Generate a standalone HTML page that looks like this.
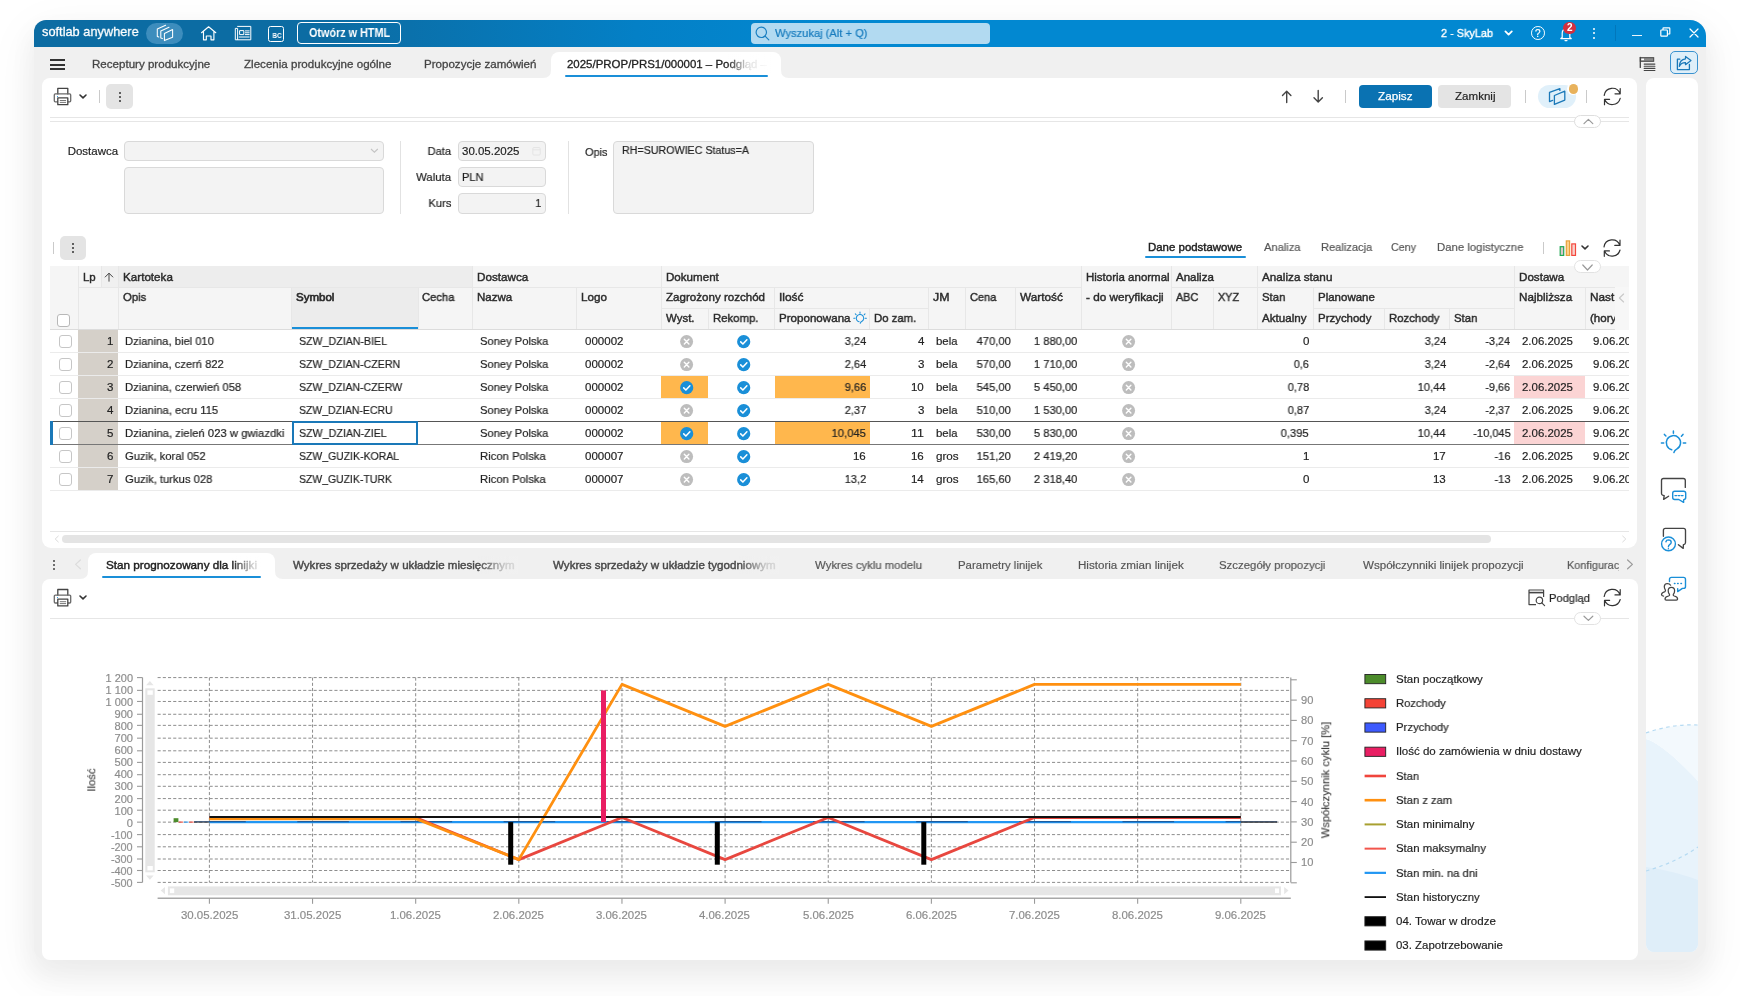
<!DOCTYPE html>
<html lang="pl"><head><meta charset="utf-8"><title>softlab anywhere</title><style>
html,body{margin:0;padding:0;width:1740px;height:996px;overflow:hidden;background:#fff;font-family:"Liberation Sans",sans-serif;}
.a{position:absolute;box-sizing:border-box;}
.t{position:absolute;white-space:pre;display:block;will-change:transform;}
svg{position:absolute;overflow:visible;}
#root{position:absolute;left:0;top:0;width:1740px;height:996px;}
</style></head><body>
<div class="a" style="left:34px;top:20px;width:1672px;height:940px;background:#f0f0f0;border-radius:12px 16px 16px 12px;box-shadow:0 13px 22px 5px rgba(0,0,0,0.04),0 14px 50px 4px rgba(0,0,0,0.05);"></div>
<div class="a" style="left:34px;top:20px;width:1672px;height:27px;border-radius:12px 16px 0 0;background:linear-gradient(90deg,#0c6ca3 0%,#0c6ca3 18%,#0480c6 36%,#0288d1 48%,#0288d1 100%);"></div>
<span class="t" style="top:24.20px;font-size:12.8px;line-height:16.8px;color:#fff;left:41.70px;transform-origin:0 50%;transform:scaleX(0.9984);-webkit-text-stroke:0.27px #fff;">softlab anywhere</span>
<div class="a" style="left:146px;top:23px;width:37px;height:21px;background:#3d8dbd;border-radius:11px;"></div>
<svg style="left:0;top:0" width="1740" height="996" viewBox="0 0 1740 996"><path d="M164.4 33.4 L172.6 29.6 V37.2 L164.4 40.6 Z M169 27.3 L160.8 30.9 V38 L162.4 38.6 M165.6 25.3 L157.3 28.9 V36.4 L158.8 37" fill="none" stroke="#fff" stroke-width="1.05" stroke-linejoin="round" stroke-linecap="round" /></svg>
<svg style="left:0;top:0" width="1740" height="996" viewBox="0 0 1740 996"><path d="M201.5 32.7 L208.6 26.8 L215.8 32.7 M203.5 31.4 V39.8 H206.3 V36 H211 V39.8 H213.9 V31.4" fill="none" stroke="#fff" stroke-width="1.15" stroke-linejoin="round" stroke-linecap="round" /></svg>
<svg style="left:0;top:0" width="1740" height="996" viewBox="0 0 1740 996"><path d="M237.6 26.4 H250.8 V39.8 H235.3 V28.4 H237.6 V39.6 M240 30.6 H243.8 V34.6 H240 Z M245.4 30.9 H249.2 M245.4 32.8 H249.2 M245.4 34.6 H249.2 M239.2 37 H249.2" fill="none" stroke="#fff" stroke-width="1.0" stroke-linejoin="round" stroke-linecap="round" /></svg>
<div class="a" style="left:268.4px;top:25.8px;width:15.8px;height:15.8px;border:1.2px solid #fff;border-radius:2.5px;"></div>
<span class="t" style="top:30.40px;font-size:7px;line-height:11px;color:#fff;font-weight:bold;left:271.64px;transform-origin:50% 50%;transform:scaleX(0.9000);">BC</span>
<div class="a" style="left:297px;top:22px;width:104px;height:22px;border:1.2px solid #fff;border-radius:4px;"></div>
<span class="t" style="top:25.20px;font-size:12px;line-height:16px;color:#fff;font-weight:bold;left:308.50px;transform-origin:0 50%;transform:scaleX(0.9000);">Otwórz w HTML</span>
<div class="a" style="left:751px;top:22.5px;width:239px;height:21.5px;background:#b2daf1;border-radius:4px;"></div>
<svg style="left:755px;top:25.5px;" width="15" height="15" viewBox="0 0 15 15"><circle cx="6.3" cy="6.3" r="5.2" fill="none" stroke="#1a7fc1" stroke-width="1.2"/><path d="M10.1 10.1 L13.8 13.8" stroke="#1a7fc1" stroke-width="1.2" stroke-linecap="round"/></svg>
<span class="t" style="top:26.15px;font-size:11.5px;line-height:15.5px;color:#187cbe;left:775.00px;transform-origin:0 50%;transform:scaleX(0.9692);-webkit-text-stroke:0.22px #187cbe;">Wyszukaj (Alt + Q)</span>
<span class="t" style="top:25.40px;font-size:11.6px;line-height:15.6px;color:#fff;left:1440.80px;transform-origin:0 50%;transform:scaleX(0.9383);-webkit-text-stroke:0.37px #fff;">2 - SkyLab</span>
<svg style="left:0;top:0" width="1740" height="996" viewBox="0 0 1740 996"><path d="M1505.4 31.4 L1508.6 34.6 L1511.8 31.4" fill="none" stroke="#fff" stroke-width="1.8" stroke-linejoin="round" stroke-linecap="round" /></svg>
<div class="a" style="left:1530.8px;top:26.4px;width:13.8px;height:13.8px;border:1.2px solid #fff;border-radius:50%;"></div>
<span class="t" style="top:26.60px;font-size:10px;line-height:14px;color:#fff;left:1534.92px;transform-origin:50% 50%;transform:scaleX(1.0000);-webkit-text-stroke:0.18px #fff;">?</span>
<svg style="left:1559px;top:27px;" width="14" height="15" viewBox="0 0 14 15"><path d="M3.2 10.6 V6.2 C3.2 3.6 4.8 2 7 2 C9.2 2 10.8 3.6 10.8 6.2 V10.6 L12.2 11.6 H1.8 Z M6 13.6 H8" fill="none" stroke="#fff" stroke-width="1.2" stroke-linejoin="round" stroke-linecap="round"/></svg>
<div class="a" style="left:1563.4px;top:21.8px;width:12.6px;height:12.6px;background:#d32f3f;border-radius:50%;"></div>
<span class="t" style="top:21.30px;font-size:10px;line-height:14px;color:#fff;font-weight:bold;left:1566.92px;transform-origin:50% 50%;transform:scaleX(1.0000);">2</span>
<div class="a" style="left:1593.2px;top:28px;width:2px;height:2px;background:#fff;border-radius:50%;"></div>
<div class="a" style="left:1593.2px;top:32.3px;width:2px;height:2px;background:#fff;border-radius:50%;"></div>
<div class="a" style="left:1593.2px;top:36.7px;width:2px;height:2px;background:#fff;border-radius:50%;"></div>
<div class="a" style="left:1615.4px;top:25px;width:1px;height:16px;background:rgba(0,60,110,0.22);"></div>
<div class="a" style="left:1632px;top:35px;width:10px;height:1.2px;background:#e8f4fb;"></div>
<svg style="left:1659.5px;top:27px;" width="11" height="10" viewBox="0 0 11 10"><g fill="none" stroke="#fff" stroke-width="1.2"><rect x="0.8" y="3" width="6.6" height="6.2" rx="0.8"/><path d="M3 3 V1.4 Q3 0.8 3.6 0.8 H9.2 Q9.8 0.8 9.8 1.4 V6.4 Q9.8 7 9.2 7 H7.4"/></g></svg>
<svg style="left:1689px;top:28px;" width="10" height="10" viewBox="0 0 10 10"><path d="M1 1 L9 9 M9 1 L1 9" stroke="#fff" stroke-width="1.2" stroke-linecap="round"/></svg>
<div class="a" style="left:50px;top:59.2px;width:15px;height:2px;background:#333;"></div>
<div class="a" style="left:50px;top:63.5px;width:15px;height:2px;background:#333;"></div>
<div class="a" style="left:50px;top:67.8px;width:15px;height:2px;background:#333;"></div>
<span class="t" style="top:56.58px;font-size:11.43px;line-height:15.43px;color:#454545;left:92.00px;transform-origin:0 50%;transform:scaleX(1.0126);-webkit-text-stroke:0.3px #454545;">Receptury produkcyjne</span>
<span class="t" style="top:56.58px;font-size:11.43px;line-height:15.43px;color:#454545;left:243.50px;transform-origin:0 50%;transform:scaleX(1.0144);-webkit-text-stroke:0.3px #454545;">Zlecenia produkcyjne ogólne</span>
<span class="t" style="top:56.58px;font-size:11.43px;line-height:15.43px;color:#454545;left:423.50px;transform-origin:0 50%;transform:scaleX(1.0125);-webkit-text-stroke:0.3px #454545;">Propozycje zamówień</span>
<div class="a" style="left:551px;top:52px;width:230px;height:27px;background:#fff;border-radius:8px 8px 0 0;"></div>
<svg style="left:543px;top:70px;" width="8" height="8" viewBox="0 0 8 8"><path d="M8 0 V8 H0 Q8 8 8 0 Z" fill="#fff"/></svg>
<svg style="left:781px;top:70px;" width="8" height="8" viewBox="0 0 8 8"><path d="M0 0 V8 H8 Q0 8 0 0 Z" fill="#fff"/></svg>
<span class="t" style="top:56.58px;font-size:11.43px;line-height:15.43px;color:#222;left:566.80px;transform-origin:0 50%;transform:scaleX(1.0030);-webkit-text-stroke:0.3px #222;">2025/PROP/PRS1/000001 – Podgląd –</span>
<div class="a" style="left:727px;top:54px;width:46px;height:20px;background:linear-gradient(90deg,rgba(255,255,255,0) 0%,rgba(255,255,255,0.85) 45%,#fff 95%);"></div>
<div class="a" style="left:565px;top:75px;width:202.5px;height:2px;background:#1a8fd8;border-radius:1px;"></div>
<svg style="left:0;top:0" width="1740" height="996" viewBox="0 0 1740 996"><rect x="1640.3" y="57.7" width="13.4" height="3.6" fill="#8c8c8c" stroke="#444" stroke-width="1"/><rect x="1641.2" y="58.6" width="2.8" height="1.6" fill="#fff"/></svg>
<svg style="left:0;top:0" width="1740" height="996" viewBox="0 0 1740 996"><path d="M1640.3 57.4 V67.4" fill="none" stroke="#444" stroke-width="1.3" stroke-linejoin="round" stroke-linecap="round" /></svg>
<svg style="left:0;top:0" width="1740" height="996" viewBox="0 0 1740 996"><path d="M1644.2 64.1 H1654.9 M1644.2 66.3 H1654.9 M1644.2 68.4 H1654.9 M1644.2 70.5 H1654.9" fill="none" stroke="#444" stroke-width="1.1" stroke-linejoin="round" stroke-linecap="round" /></svg>
<div class="a" style="left:1669.5px;top:51px;width:28.4px;height:22.8px;background:#dfeff9;border:1.3px solid #3a92cf;border-radius:5px;"></div>
<svg style="left:0;top:0" width="1740" height="996" viewBox="0 0 1740 996"><path d="M1679.8 59.2 H1677.4 V69.6 H1689.4 V64.4" fill="none" stroke="#1a78b8" stroke-width="1.3" stroke-linejoin="round" stroke-linecap="round" /></svg>
<svg style="left:0;top:0" width="1740" height="996" viewBox="0 0 1740 996"><path d="M1685.5 58.8 V56.4 L1691 60.5 L1685.5 64.7 V62.6 Q1681.2 62.4 1679.3 66.4 Q1679.6 59.4 1685.5 58.8 Z" fill="none" stroke="#1a78b8" stroke-width="1.2" stroke-linejoin="round" stroke-linecap="round" /></svg>
<div class="a" style="left:42px;top:78px;width:1595.4px;height:469.5px;background:#fff;border-radius:8px 8px 9px 9px;"></div>
<div class="a" style="left:42px;top:579px;width:1595.5px;height:380.5px;background:#fff;border-radius:8px;"></div>
<div class="a" style="left:1646px;top:78px;width:52px;height:874px;background:#fff;border-radius:8px;overflow:hidden;"><svg style="left:0;top:0" width="52" height="874" viewBox="0 0 52 874"><path d="M0 661 C14 665 34 684 52 703 V874 H0 Z" fill="#e8f3fb"/><path d="M0 655 C16 649 36 646 52 647 V703 C34 684 14 665 0 661 Z" fill="#f3f9fd"/><path d="M0 789 C16 791 36 796 52 802 V874 H0 Z" fill="#dfeef9"/><path d="M0 655 C16 649 36 646 52 647" fill="none" stroke="#b5daf2" stroke-width="1.2" stroke-dasharray="3.5 3.5"/><path d="M0 793 C18 788 36 780 52 769" fill="none" stroke="#b5daf2" stroke-width="1.2" stroke-dasharray="3.5 3.5"/></svg></div>
<svg style="left:0;top:0" width="1740" height="996" viewBox="0 0 1740 996"><path d="M1671.7 449.7 A7.15 7.15 0 1 1 1676.7 449.1 Q1674.6 450.2 1673.9 452.5 M1673.4 430.9 V433.2 M1664.4 434.4 L1665.9 436 M1683 434.4 L1681.4 436.2 M1661.4 442.9 H1663.7 M1683.3 442.9 H1685.7" fill="none" stroke="#1a8fd8" stroke-width="1.5" stroke-linejoin="round" stroke-linecap="round" /></svg>
<svg style="left:0;top:0" width="1740" height="996" viewBox="0 0 1740 996"><path d="M1685.3 487.4 V480.5 Q1685.3 478.5 1683.3 478.5 H1663.5 Q1661.5 478.5 1661.5 480.5 V493.6 Q1661.5 495 1663 495.3 L1664.2 495.6 L1663.6 499.4 L1668.6 496.2" fill="none" stroke="#444" stroke-width="1.35" stroke-linejoin="round" stroke-linecap="round" /></svg>
<svg style="left:0;top:0" width="1740" height="996" viewBox="0 0 1740 996"><path d="M1674.7 491.2 H1683.7 Q1685.7 491.2 1685.7 493.2 V497.4 Q1685.7 499.4 1683.7 499.6 L1683.6 502.4 L1678.8 499.5 H1674.7 Q1672.7 499.5 1672.7 497.5 V493.2 Q1672.7 491.2 1674.7 491.2 Z M1675 495.6 H1676.6 M1678.2 495.6 H1679.8 M1681.4 495.6 H1683" fill="none" stroke="#1a8fd8" stroke-width="1.4" stroke-linejoin="round" stroke-linecap="round" /></svg>
<svg style="left:0;top:0" width="1740" height="996" viewBox="0 0 1740 996"><path d="M1663.4 536.2 V530.4 Q1663.4 528.4 1665.4 528.4 H1683.5 Q1685.5 528.4 1685.5 530.4 V542.6 Q1685.5 544.4 1683.8 544.6 L1683.4 544.7 L1683.2 548.4 L1678.4 544.7" fill="none" stroke="#444" stroke-width="1.35" stroke-linejoin="round" stroke-linecap="round" /></svg>
<svg style="left:0;top:0" width="1740" height="996" viewBox="0 0 1740 996"><path d="M1675.4 543.9 A6.9 6.9 0 1 1 1661.6 543.9 A6.9 6.9 0 1 1 1675.4 543.9 Z M1665.9 541.8 Q1666.4 539.9 1668.5 539.9 Q1671.2 540 1671.2 542.2 Q1671.2 543.6 1669.6 544.6 Q1668.4 545.4 1668.4 546.8 M1668.4 548.6 V548.7" fill="none" stroke="#1a8fd8" stroke-width="1.4" stroke-linejoin="round" stroke-linecap="round" /></svg>
<svg style="left:0;top:0" width="1740" height="996" viewBox="0 0 1740 996"><path d="M1669.5 581.5 V579.4 Q1669.5 577.4 1671.5 577.4 H1683.5 Q1685.5 577.4 1685.5 579.4 V586.4 Q1685.5 588.4 1683.5 588.4 H1682.4 L1677.7 591.6 V588.6 M1674.4 583.5 H1675 M1677.6 583.5 H1678.2 M1680.9 583.5 H1681.5" fill="none" stroke="#1a8fd8" stroke-width="1.4" stroke-linejoin="round" stroke-linecap="round" /></svg>
<svg style="left:0;top:0" width="1740" height="996" viewBox="0 0 1740 996"><path d="M1670.6 585.2 Q1669.6 583.5 1667.4 583.5 Q1664.3 583.6 1664.3 586.6 Q1664.3 588.4 1665.2 589.6 Q1665.9 590.8 1665 591.6 Q1661.5 592.6 1661.5 594.8 Q1661.6 596 1663.6 596" fill="none" stroke="#444" stroke-width="1.25" stroke-linejoin="round" stroke-linecap="round" /></svg>
<svg style="left:0;top:0" width="1740" height="996" viewBox="0 0 1740 996"><path d="M1671.4 587.3 Q1674.6 587.3 1674.6 590.8 Q1674.6 593 1673.4 594.2 Q1672.8 595.4 1674.2 596 Q1677.6 596.8 1677.6 599 Q1677.6 600 1676.4 600 H1666.2 Q1665 600 1665 599 Q1665 596.8 1668.6 596 Q1670 595.4 1669.4 594.2 Q1668.2 593 1668.2 590.8 Q1668.2 587.3 1671.4 587.3 Z" fill="#fff" stroke="#444" stroke-width="1.25" stroke-linejoin="round" stroke-linecap="round" /></svg>
<svg style="left:0;top:0" width="1740" height="996" viewBox="0 0 1740 996"><path d="M57.80 93.90 V88.30 H67.80 V93.90" fill="none" stroke="#444" stroke-width="1.3" stroke-linejoin="round" stroke-linecap="round" /></svg>
<svg style="left:0;top:0" width="1740" height="996" viewBox="0 0 1740 996"><path d="M57.80 101.80 H55.30 Q54.30 101.80 54.30 100.80 V94.90 Q54.30 93.90 55.30 93.90 H69.70 Q70.70 93.90 70.70 94.90 V100.80 Q70.70 101.80 69.70 101.80 H67.80" fill="none" stroke="#6a6a6a" stroke-width="1.3" stroke-linejoin="round" stroke-linecap="round" /></svg>
<svg style="left:0;top:0" width="1740" height="996" viewBox="0 0 1740 996"><path d="M57.80 97.90 H67.80 V104.70 H57.80 Z" fill="#fff" stroke="#444" stroke-width="1.3" stroke-linejoin="round" stroke-linecap="round" /></svg>
<svg style="left:0;top:0" width="1740" height="996" viewBox="0 0 1740 996"><path d="M60.20 100.50 H65.70 M60.20 102.40 H65.70" fill="none" stroke="#666" stroke-width="0.9" stroke-linejoin="round" stroke-linecap="round" /></svg>
<div class="a" style="left:56.5px;top:95.5px;width:1.9px;height:1.2px;background:#3aa0e0;"></div>
<svg style="left:78.5px;top:94.3px;" width="8" height="6" viewBox="0 0 8 6"><path d="M1 1 L4.0 3.8 L7 1" fill="none" stroke="#333" stroke-width="1.6" stroke-linecap="round" stroke-linejoin="round"/></svg>
<div class="a" style="left:98.7px;top:90.4px;width:1.3px;height:12.4px;background:#cacaca;"></div>
<div class="a" style="left:106.2px;top:84.4px;width:26.9px;height:24.7px;background:#e4e4e4;border-radius:5px;"></div>
<div class="a" style="left:118.65px;top:91.55px;width:2px;height:2px;background:#333;border-radius:50%;"></div>
<div class="a" style="left:118.65px;top:95.75px;width:2px;height:2px;background:#333;border-radius:50%;"></div>
<div class="a" style="left:118.65px;top:99.95px;width:2px;height:2px;background:#333;border-radius:50%;"></div>
<svg style="left:0;top:0" width="1740" height="996" viewBox="0 0 1740 996"><path d="M1286.7 102.6 V91.4 M1282.5 95.5 L1286.7 91.3 L1290.9 95.5" fill="none" stroke="#444" stroke-width="1.4" stroke-linejoin="round" stroke-linecap="round" /></svg>
<svg style="left:0;top:0" width="1740" height="996" viewBox="0 0 1740 996"><path d="M1318.2 90.4 V101.8 M1314 97.8 L1318.2 102 L1322.4 97.8" fill="none" stroke="#444" stroke-width="1.4" stroke-linejoin="round" stroke-linecap="round" /></svg>
<div class="a" style="left:1344.5px;top:90.4px;width:1.3px;height:12.4px;background:#cacaca;"></div>
<div class="a" style="left:1358.8px;top:85px;width:73.4px;height:23.4px;background:#0a72b2;border-radius:4px;"></div>
<span class="t" style="top:89.28px;font-size:11.43px;line-height:15.43px;color:#fff;left:1378.00px;transform-origin:0 50%;transform:scaleX(1.0251);-webkit-text-stroke:0.25px #fff;">Zapisz</span>
<div class="a" style="left:1438px;top:85px;width:73px;height:23.4px;background:#e4e4e4;border-radius:4px;"></div>
<span class="t" style="top:89.28px;font-size:11.43px;line-height:15.43px;color:#222;left:1454.50px;transform-origin:0 50%;transform:scaleX(1.0129);-webkit-text-stroke:0.18px #222;">Zamknij</span>
<div class="a" style="left:1524.8px;top:90.4px;width:1.3px;height:12.4px;background:#cacaca;"></div>
<div class="a" style="left:1538.3px;top:84.9px;width:37.7px;height:23.5px;background:#e0f0fa;border-radius:12px;"></div>
<svg style="left:0;top:0" width="1740" height="996" viewBox="0 0 1740 996"><path d="M1554.4 95.5 L1564.8 91.2 V100.1 L1554.4 104.4 Z M1559.9 90.4 V88.6 L1549.5 92.4 V101.6 L1552.6 100.4" fill="none" stroke="#1a78b8" stroke-width="1.3" stroke-linejoin="round" stroke-linecap="round" /></svg>
<div class="a" style="left:1567.4px;top:82.9px;width:12px;height:12px;background:#fff;border-radius:50%;"></div>
<div class="a" style="left:1568.7px;top:84.2px;width:9.4px;height:9.4px;background:#e8b25c;border-radius:50%;"></div>
<div class="a" style="left:1586.1px;top:90.4px;width:1.3px;height:12.4px;background:#cacaca;"></div>
<svg style="left:0;top:0" width="1740" height="996" viewBox="0 0 1740 996"><path d="M1604.20 95.40 A8.2 8.2 0 0 1 1620.00 93.60 M1620.20 88.60 V93.80 H1615.00 M1620.20 98.40 A8.2 8.2 0 0 1 1604.70 99.50 M1604.50 104.70 V99.30 H1609.60" fill="none" stroke="#333" stroke-width="1.2" stroke-linejoin="round" stroke-linecap="round" /></svg>
<div class="a" style="left:50px;top:117.2px;width:1579px;height:1px;background:#e6e6e6;"></div>
<div class="a" style="left:50px;top:120.8px;width:1579px;height:1px;background:#e6e6e6;"></div>
<div class="a" style="left:1574.3px;top:114.5px;width:27.2px;height:13.2px;background:#fff;border:1px solid #dedede;border-radius:7px;"></div>
<svg style="left:1582.5px;top:117.6px;" width="11" height="7" viewBox="0 0 11 7"><path d="M1 5.6 L5.4 1.4 L9.8 5.6" fill="none" stroke="#999" stroke-width="1.2" stroke-linecap="round" stroke-linejoin="round"/></svg>
<span class="t" style="top:143.78px;font-size:11.43px;line-height:15.43px;color:#222;right:1622.00px;transform-origin:100% 50%;transform:scaleX(1.0069);-webkit-text-stroke:0.18px #222;">Dostawca</span>
<div class="a" style="left:124px;top:141px;width:260px;height:20.4px;background:#f3f3f3;border:1px solid #d9d9d9;border-radius:4px;"></div>
<svg style="left:369.5px;top:148.4px;" width="10" height="6" viewBox="0 0 10 6"><path d="M1 1 L4.4 4.2 L7.8 1" fill="none" stroke="#c4c4c4" stroke-width="1.1"/></svg>
<div class="a" style="left:124px;top:167px;width:260px;height:47px;background:#f3f3f3;border:1px solid #d9d9d9;border-radius:4px;"></div>
<div class="a" style="left:399.6px;top:141px;width:1px;height:73px;background:#e2e2e2;"></div>
<span class="t" style="top:143.78px;font-size:11.43px;line-height:15.43px;color:#222;right:1288.60px;transform-origin:100% 50%;transform:scaleX(0.9735);-webkit-text-stroke:0.18px #222;">Data</span>
<span class="t" style="top:169.78px;font-size:11.43px;line-height:15.43px;color:#222;right:1288.60px;transform-origin:100% 50%;transform:scaleX(0.9964);-webkit-text-stroke:0.18px #222;">Waluta</span>
<span class="t" style="top:195.78px;font-size:11.43px;line-height:15.43px;color:#222;right:1288.60px;transform-origin:100% 50%;transform:scaleX(0.9787);-webkit-text-stroke:0.18px #222;">Kurs</span>
<div class="a" style="left:458px;top:141px;width:87.6px;height:20.4px;background:#f3f3f3;border:1px solid #d9d9d9;border-radius:4px;"></div>
<div class="a" style="left:458px;top:167px;width:87.6px;height:20.4px;background:#f3f3f3;border:1px solid #d9d9d9;border-radius:4px;"></div>
<div class="a" style="left:458px;top:193px;width:87.6px;height:20.8px;background:#f3f3f3;border:1px solid #d9d9d9;border-radius:4px;"></div>
<span class="t" style="top:143.78px;font-size:11.43px;line-height:15.43px;color:#222;left:462.30px;transform-origin:0 50%;transform:scaleX(1.0057);-webkit-text-stroke:0.18px #222;">30.05.2025</span>
<svg style="left:532px;top:146px;" width="9" height="10" viewBox="0 0 9 10"><g fill="none" stroke="#e4e4e4" stroke-width="1"><rect x="0.8" y="1.6" width="7.4" height="7.4" rx="1"/><path d="M0.8 3.8 H8.2"/></g></svg>
<span class="t" style="top:169.78px;font-size:11.43px;line-height:15.43px;color:#222;left:462.30px;transform-origin:0 50%;transform:scaleX(0.9670);-webkit-text-stroke:0.18px #222;">PLN</span>
<span class="t" style="top:195.78px;font-size:11.43px;line-height:15.43px;color:#222;right:1199.00px;transform-origin:100% 50%;transform:scaleX(0.9500);-webkit-text-stroke:0.18px #222;">1</span>
<div class="a" style="left:568px;top:141px;width:1px;height:73px;background:#e2e2e2;"></div>
<span class="t" style="top:144.59px;font-size:11.43px;line-height:15.43px;color:#222;left:584.50px;transform-origin:0 50%;transform:scaleX(0.9574);-webkit-text-stroke:0.18px #222;">Opis</span>
<div class="a" style="left:613.3px;top:141px;width:200.6px;height:73px;background:#f3f3f3;border:1px solid #d9d9d9;border-radius:4px;"></div>
<span class="t" style="top:143.28px;font-size:11.43px;line-height:15.43px;color:#222;left:621.80px;transform-origin:0 50%;transform:scaleX(0.9349);-webkit-text-stroke:0.18px #222;">RH=SUROWIEC Status=A</span>
<div class="a" style="left:52.8px;top:241.6px;width:1.3px;height:12.4px;background:#cacaca;"></div>
<div class="a" style="left:59.8px;top:235.5px;width:26.6px;height:24.6px;background:#e4e4e4;border-radius:5px;"></div>
<div class="a" style="left:72.1px;top:242.60000000000002px;width:2px;height:2px;background:#333;border-radius:50%;"></div>
<div class="a" style="left:72.1px;top:246.8px;width:2px;height:2px;background:#333;border-radius:50%;"></div>
<div class="a" style="left:72.1px;top:251.0px;width:2px;height:2px;background:#333;border-radius:50%;"></div>
<span class="t" style="top:239.59px;font-size:11.43px;line-height:15.43px;color:#222;left:1148.20px;transform-origin:0 50%;transform:scaleX(1.0012);-webkit-text-stroke:0.42px #222;">Dane podstawowe</span>
<div class="a" style="left:1145.2px;top:256.4px;width:100.6px;height:2px;background:#1a8fd8;border-radius:1px;"></div>
<span class="t" style="top:239.59px;font-size:11.43px;line-height:15.43px;color:#555;left:1264.00px;transform-origin:0 50%;transform:scaleX(0.9768);-webkit-text-stroke:0.18px #555;">Analiza</span>
<span class="t" style="top:239.59px;font-size:11.43px;line-height:15.43px;color:#555;left:1320.50px;transform-origin:0 50%;transform:scaleX(0.9734);-webkit-text-stroke:0.18px #555;">Realizacja</span>
<span class="t" style="top:239.59px;font-size:11.43px;line-height:15.43px;color:#555;left:1390.80px;transform-origin:0 50%;transform:scaleX(0.9373);-webkit-text-stroke:0.18px #555;">Ceny</span>
<span class="t" style="top:239.59px;font-size:11.43px;line-height:15.43px;color:#555;left:1436.90px;transform-origin:0 50%;transform:scaleX(0.9933);-webkit-text-stroke:0.18px #555;">Dane logistyczne</span>
<div class="a" style="left:1542.8px;top:241.6px;width:1.3px;height:12.4px;background:#cacaca;"></div>
<svg style="left:0;top:0" width="1740" height="996" viewBox="0 0 1740 996"><rect x="1560.2" y="246.7" width="3.5" height="8.7" fill="#dcc6cc" stroke="#21a854" stroke-width="1.2"/><rect x="1566.3" y="240.9" width="3.3" height="14.5" fill="#fdd08a" stroke="#e8a23c" stroke-width="1.2"/><rect x="1571.8" y="243.9" width="3.7" height="11.5" fill="#f8d2cc" stroke="#f4473c" stroke-width="1.2"/></svg>
<svg style="left:1580.6px;top:245.2px;" width="8" height="6" viewBox="0 0 8 6"><path d="M1 1 L4.0 3.8 L7 1" fill="none" stroke="#333" stroke-width="1.6" stroke-linecap="round" stroke-linejoin="round"/></svg>
<svg style="left:0;top:0" width="1740" height="996" viewBox="0 0 1740 996"><path d="M1604.00 247.00 A8.2 8.2 0 0 1 1619.80 245.20 M1620.00 240.20 V245.40 H1614.80 M1620.00 250.00 A8.2 8.2 0 0 1 1604.50 251.10 M1604.30 256.30 V250.90 H1609.40" fill="none" stroke="#333" stroke-width="1.2" stroke-linejoin="round" stroke-linecap="round" /></svg>
<div class="a" style="left:50px;top:266px;width:1579px;height:63.60000000000002px;background:#f5f5f5;"></div>
<div class="a" style="left:118px;top:266px;width:354.6px;height:21.30000000000001px;background:#ededed;"></div>
<div class="a" style="left:101px;top:266px;width:17px;height:21.30000000000001px;background:#f0f0f0;"></div>
<div class="a" style="left:50px;top:266px;width:28px;height:63.60000000000002px;background:#f5f5f5;"></div>
<div class="a" style="left:78px;top:287.3px;width:40px;height:42.30000000000001px;background:#f5f5f5;"></div>
<div class="a" style="left:291.5px;top:287.3px;width:126.5px;height:42.30000000000001px;background:#ececec;"></div>
<div class="a" style="left:292px;top:327.0px;width:126px;height:2px;background:#1a8fd8;"></div>
<div class="a" style="left:77.5px;top:266px;width:1px;height:63.60000000000002px;background:#e7e7e7;"></div>
<div class="a" style="left:117.5px;top:266px;width:1px;height:63.60000000000002px;background:#e7e7e7;"></div>
<div class="a" style="left:472.1px;top:266px;width:1px;height:63.60000000000002px;background:#e7e7e7;"></div>
<div class="a" style="left:660.5px;top:266px;width:1px;height:63.60000000000002px;background:#e7e7e7;"></div>
<div class="a" style="left:1080.8px;top:266px;width:1px;height:63.60000000000002px;background:#e7e7e7;"></div>
<div class="a" style="left:1170.5px;top:266px;width:1px;height:63.60000000000002px;background:#e7e7e7;"></div>
<div class="a" style="left:1256.8px;top:266px;width:1px;height:63.60000000000002px;background:#e7e7e7;"></div>
<div class="a" style="left:1513.8px;top:266px;width:1px;height:63.60000000000002px;background:#e7e7e7;"></div>
<div class="a" style="left:100.5px;top:266px;width:1px;height:21.30000000000001px;background:#e7e7e7;"></div>
<div class="a" style="left:78px;top:286.8px;width:23px;height:1px;background:#e7e7e7;"></div>
<div class="a" style="left:101px;top:286.8px;width:17px;height:1px;background:#e8e8e8;"></div>
<div class="a" style="left:118px;top:286.8px;width:963.3px;height:1px;background:#e7e7e7;"></div>
<div class="a" style="left:1171px;top:286.8px;width:458px;height:1px;background:#e7e7e7;"></div>
<div class="a" style="left:291.0px;top:287.3px;width:1px;height:42.30000000000001px;background:#e7e7e7;"></div>
<div class="a" style="left:417.5px;top:287.3px;width:1px;height:42.30000000000001px;background:#e7e7e7;"></div>
<div class="a" style="left:576.3px;top:287.3px;width:1px;height:42.30000000000001px;background:#e7e7e7;"></div>
<div class="a" style="left:774.3px;top:287.3px;width:1px;height:42.30000000000001px;background:#e7e7e7;"></div>
<div class="a" style="left:927.8px;top:287.3px;width:1px;height:42.30000000000001px;background:#e7e7e7;"></div>
<div class="a" style="left:965.2px;top:287.3px;width:1px;height:42.30000000000001px;background:#e7e7e7;"></div>
<div class="a" style="left:1015.2px;top:287.3px;width:1px;height:42.30000000000001px;background:#e7e7e7;"></div>
<div class="a" style="left:1212.8px;top:287.3px;width:1px;height:42.30000000000001px;background:#e7e7e7;"></div>
<div class="a" style="left:1312.5px;top:287.3px;width:1px;height:42.30000000000001px;background:#e7e7e7;"></div>
<div class="a" style="left:1584.8px;top:287.3px;width:1px;height:42.30000000000001px;background:#e7e7e7;"></div>
<div class="a" style="left:661px;top:308.2px;width:267.29999999999995px;height:1px;background:#e7e7e7;"></div>
<div class="a" style="left:1313px;top:308.2px;width:201.29999999999995px;height:1px;background:#e7e7e7;"></div>
<div class="a" style="left:707.5px;top:308.7px;width:1px;height:20.900000000000034px;background:#e7e7e7;"></div>
<div class="a" style="left:868.8px;top:308.7px;width:1px;height:20.900000000000034px;background:#e7e7e7;"></div>
<div class="a" style="left:1383.5px;top:308.7px;width:1px;height:20.900000000000034px;background:#e7e7e7;"></div>
<div class="a" style="left:1449.2px;top:308.7px;width:1px;height:20.900000000000034px;background:#e7e7e7;"></div>
<div class="a" style="left:50px;top:329.1px;width:1579px;height:1px;background:#dcdcdc;"></div>
<span class="t" style="top:269.79px;font-size:11.43px;line-height:15.43px;color:#2b2b2b;left:82.60px;transform-origin:0 50%;transform:scaleX(0.9996);-webkit-text-stroke:0.42px #2b2b2b;">Lp</span>
<svg style="left:104.4px;top:272px;" width="10" height="11" viewBox="0 0 10 11"><path d="M5 9.2 V1.4 M1.2 5 L5 1.2 L8.8 5" fill="none" stroke="#444" stroke-width="1" stroke-linecap="round" stroke-linejoin="round"/></svg>
<span class="t" style="top:269.79px;font-size:11.43px;line-height:15.43px;color:#2b2b2b;left:122.90px;transform-origin:0 50%;transform:scaleX(1.0205);-webkit-text-stroke:0.42px #2b2b2b;">Kartoteka</span>
<span class="t" style="top:290.19px;font-size:11.43px;line-height:15.43px;color:#2b2b2b;left:122.70px;transform-origin:0 50%;transform:scaleX(0.9878);-webkit-text-stroke:0.42px #2b2b2b;">Opis</span>
<span class="t" style="top:290.19px;font-size:11.43px;line-height:15.43px;color:#2b2b2b;left:295.60px;transform-origin:0 50%;transform:scaleX(1.0072);-webkit-text-stroke:0.67px #2b2b2b;">Symbol</span>
<span class="t" style="top:290.19px;font-size:11.43px;line-height:15.43px;color:#2b2b2b;left:421.70px;transform-origin:0 50%;transform:scaleX(0.9801);-webkit-text-stroke:0.42px #2b2b2b;">Cecha</span>
<span class="t" style="top:269.79px;font-size:11.43px;line-height:15.43px;color:#2b2b2b;left:477.00px;transform-origin:0 50%;transform:scaleX(1.0218);-webkit-text-stroke:0.42px #2b2b2b;">Dostawca</span>
<span class="t" style="top:290.19px;font-size:11.43px;line-height:15.43px;color:#2b2b2b;left:477.00px;transform-origin:0 50%;transform:scaleX(1.0094);-webkit-text-stroke:0.42px #2b2b2b;">Nazwa</span>
<span class="t" style="top:290.19px;font-size:11.43px;line-height:15.43px;color:#2b2b2b;left:581.20px;transform-origin:0 50%;transform:scaleX(1.0191);-webkit-text-stroke:0.42px #2b2b2b;">Logo</span>
<span class="t" style="top:269.79px;font-size:11.43px;line-height:15.43px;color:#2b2b2b;left:665.70px;transform-origin:0 50%;transform:scaleX(1.0151);-webkit-text-stroke:0.42px #2b2b2b;">Dokument</span>
<span class="t" style="top:290.19px;font-size:11.43px;line-height:15.43px;color:#2b2b2b;left:665.70px;transform-origin:0 50%;transform:scaleX(1.0130);-webkit-text-stroke:0.42px #2b2b2b;">Zagrożony rozchód</span>
<span class="t" style="top:310.89px;font-size:11.43px;line-height:15.43px;color:#2b2b2b;left:665.70px;transform-origin:0 50%;transform:scaleX(1.0024);-webkit-text-stroke:0.42px #2b2b2b;">Wyst.</span>
<span class="t" style="top:310.89px;font-size:11.43px;line-height:15.43px;color:#2b2b2b;left:712.50px;transform-origin:0 50%;transform:scaleX(0.9926);-webkit-text-stroke:0.42px #2b2b2b;">Rekomp.</span>
<span class="t" style="top:290.19px;font-size:11.43px;line-height:15.43px;color:#2b2b2b;left:779.30px;transform-origin:0 50%;transform:scaleX(1.0455);-webkit-text-stroke:0.42px #2b2b2b;">Ilość</span>
<span class="t" style="top:310.89px;font-size:11.43px;line-height:15.43px;color:#2b2b2b;left:779.30px;transform-origin:0 50%;transform:scaleX(1.0146);-webkit-text-stroke:0.42px #2b2b2b;">Proponowana</span>
<span class="t" style="top:310.89px;font-size:11.43px;line-height:15.43px;color:#2b2b2b;left:874.00px;transform-origin:0 50%;transform:scaleX(0.9935);-webkit-text-stroke:0.42px #2b2b2b;">Do zam.</span>
<span class="t" style="top:290.19px;font-size:11.43px;line-height:15.43px;color:#2b2b2b;left:932.80px;transform-origin:0 50%;transform:scaleX(1.0818);-webkit-text-stroke:0.42px #2b2b2b;">JM</span>
<span class="t" style="top:290.19px;font-size:11.43px;line-height:15.43px;color:#2b2b2b;left:970.20px;transform-origin:0 50%;transform:scaleX(0.9641);-webkit-text-stroke:0.42px #2b2b2b;">Cena</span>
<span class="t" style="top:290.19px;font-size:11.43px;line-height:15.43px;color:#2b2b2b;left:1020.30px;transform-origin:0 50%;transform:scaleX(1.0336);-webkit-text-stroke:0.42px #2b2b2b;">Wartość</span>
<span class="t" style="top:269.79px;font-size:11.43px;line-height:15.43px;color:#2b2b2b;left:1086.00px;transform-origin:0 50%;transform:scaleX(1.0053);-webkit-text-stroke:0.42px #2b2b2b;">Historia anormal</span>
<span class="t" style="top:290.19px;font-size:11.43px;line-height:15.43px;color:#2b2b2b;left:1086.00px;transform-origin:0 50%;transform:scaleX(1.0287);-webkit-text-stroke:0.42px #2b2b2b;">- do weryfikacji</span>
<span class="t" style="top:269.79px;font-size:11.43px;line-height:15.43px;color:#2b2b2b;left:1175.60px;transform-origin:0 50%;transform:scaleX(1.0104);-webkit-text-stroke:0.42px #2b2b2b;">Analiza</span>
<span class="t" style="top:290.19px;font-size:11.43px;line-height:15.43px;color:#2b2b2b;left:1175.60px;transform-origin:0 50%;transform:scaleX(0.9479);-webkit-text-stroke:0.42px #2b2b2b;">ABC</span>
<span class="t" style="top:290.19px;font-size:11.43px;line-height:15.43px;color:#2b2b2b;left:1218.00px;transform-origin:0 50%;transform:scaleX(0.9507);-webkit-text-stroke:0.42px #2b2b2b;">XYZ</span>
<span class="t" style="top:269.79px;font-size:11.43px;line-height:15.43px;color:#2b2b2b;left:1262.00px;transform-origin:0 50%;transform:scaleX(1.0266);-webkit-text-stroke:0.42px #2b2b2b;">Analiza stanu</span>
<span class="t" style="top:290.19px;font-size:11.43px;line-height:15.43px;color:#2b2b2b;left:1262.00px;transform-origin:0 50%;transform:scaleX(0.9921);-webkit-text-stroke:0.42px #2b2b2b;">Stan</span>
<span class="t" style="top:310.89px;font-size:11.43px;line-height:15.43px;color:#2b2b2b;left:1262.00px;transform-origin:0 50%;transform:scaleX(1.0161);-webkit-text-stroke:0.42px #2b2b2b;">Aktualny</span>
<span class="t" style="top:290.19px;font-size:11.43px;line-height:15.43px;color:#2b2b2b;left:1317.60px;transform-origin:0 50%;transform:scaleX(1.0059);-webkit-text-stroke:0.42px #2b2b2b;">Planowane</span>
<span class="t" style="top:310.89px;font-size:11.43px;line-height:15.43px;color:#2b2b2b;left:1317.60px;transform-origin:0 50%;transform:scaleX(1.0020);-webkit-text-stroke:0.42px #2b2b2b;">Przychody</span>
<span class="t" style="top:310.89px;font-size:11.43px;line-height:15.43px;color:#2b2b2b;left:1388.60px;transform-origin:0 50%;transform:scaleX(0.9936);-webkit-text-stroke:0.42px #2b2b2b;">Rozchody</span>
<span class="t" style="top:310.89px;font-size:11.43px;line-height:15.43px;color:#2b2b2b;left:1454.30px;transform-origin:0 50%;transform:scaleX(0.9921);-webkit-text-stroke:0.42px #2b2b2b;">Stan</span>
<span class="t" style="top:269.79px;font-size:11.43px;line-height:15.43px;color:#2b2b2b;left:1519.00px;transform-origin:0 50%;transform:scaleX(1.0167);-webkit-text-stroke:0.42px #2b2b2b;">Dostawa</span>
<span class="t" style="top:290.19px;font-size:11.43px;line-height:15.43px;color:#2b2b2b;left:1519.00px;transform-origin:0 50%;transform:scaleX(1.0204);-webkit-text-stroke:0.42px #2b2b2b;">Najbliższa</span>
<span class="t" style="top:290.19px;font-size:11.43px;line-height:15.43px;color:#2b2b2b;left:1590.00px;transform-origin:0 50%;transform:scaleX(1.0332);-webkit-text-stroke:0.42px #2b2b2b;">Nast</span>
<span class="t" style="top:310.89px;font-size:11.43px;line-height:15.43px;color:#2b2b2b;left:1590.00px;transform-origin:0 50%;transform:scaleX(1.0107);-webkit-text-stroke:0.42px #2b2b2b;">(hory</span>
<div class="a" style="left:1169.8px;top:267px;width:0.9px;height:19.30000000000001px;background:#f5f5f5;"></div>
<svg style="left:0;top:0" width="1740" height="996" viewBox="0 0 1740 996"><g transform="translate(860 318.2) scale(0.52) translate(-1673.4 -442.7)"><path d="M1671.7 449.7 A7.15 7.15 0 1 1 1676.7 449.1 Q1674.6 450.2 1673.9 452.5 M1673.4 430.9 V433.2 M1664.4 434.4 L1665.9 436 M1683 434.4 L1681.4 436.2 M1661.4 442.9 H1663.7 M1683.3 442.9 H1685.7" fill="none" stroke="#1a8fd8" stroke-width="2" stroke-linecap="round" stroke-linejoin="round"/></g></svg>
<div class="a" style="left:57.3px;top:314.2px;width:13.2px;height:13.2px;background:#fff;border:1px solid #b8b8b8;border-radius:3px;"></div>
<div class="a" style="left:1615px;top:287.3px;width:14px;height:42.30000000000001px;background:#f7f7f7;"></div>
<svg style="left:1617.6px;top:292.6px;" width="7" height="10" viewBox="0 0 7 10"><path d="M5.6 1 L1.4 5 L5.6 9" fill="none" stroke="#c8c8c8" stroke-width="1.1" stroke-linecap="round" stroke-linejoin="round"/></svg>
<div class="a" style="left:1574.2px;top:260.4px;width:27.3px;height:13px;background:#fff;border:1px solid #e2e2e2;border-radius:7px;"></div>
<svg style="left:1582.3px;top:263.8px;" width="11" height="7" viewBox="0 0 11 7"><path d="M0.8 1 L5.5 6 L10.2 1" fill="none" stroke="#999" stroke-width="1.2" stroke-linecap="round" stroke-linejoin="round"/></svg>
<div class="a" style="left:78px;top:329.7px;width:40px;height:23.0px;background:#d5d0c9;"></div>
<div class="a" style="left:50px;top:352.2px;width:1579px;height:1px;background:#ebebeb;"></div>
<div class="a" style="left:58.6px;top:334.59999999999997px;width:13.2px;height:13.2px;background:#fff;border:1px solid #c6c6c6;border-radius:3px;"></div>
<span class="t" style="top:334.29px;font-size:11.43px;line-height:15.43px;color:#222;right:1626.80px;transform-origin:100% 50%;transform:scaleX(1.0093);-webkit-text-stroke:0.18px #222;">1</span>
<span class="t" style="top:334.29px;font-size:11.43px;line-height:15.43px;color:#222;left:124.90px;transform-origin:0 50%;transform:scaleX(0.9793);-webkit-text-stroke:0.18px #222;">Dzianina, biel 010</span>
<span class="t" style="top:334.29px;font-size:11.43px;line-height:15.43px;color:#222;left:299.30px;transform-origin:0 50%;transform:scaleX(0.9306);-webkit-text-stroke:0.18px #222;">SZW_DZIAN-BIEL</span>
<span class="t" style="top:334.29px;font-size:11.43px;line-height:15.43px;color:#222;left:480.30px;transform-origin:0 50%;transform:scaleX(0.9780);-webkit-text-stroke:0.18px #222;">Soney Polska</span>
<span class="t" style="top:334.29px;font-size:11.43px;line-height:15.43px;color:#222;left:584.80px;transform-origin:0 50%;transform:scaleX(1.0101);-webkit-text-stroke:0.18px #222;">000002</span>
<svg style="left:679.6999999999999px;top:334.59999999999997px;" width="13.2" height="13.2" viewBox="0 0 13.2 13.2"><circle cx="6.6" cy="6.6" r="6.5" fill="#bdbdbd"/><path d="M4.3 4.3 L8.9 8.9 M8.9 4.3 L4.3 8.9" stroke="#fff" stroke-width="1.4" stroke-linecap="round"/></svg>
<svg style="left:736.5999999999999px;top:334.5px;" width="13.4" height="13.4" viewBox="0 0 13.4 13.4"><circle cx="6.7" cy="6.7" r="6.6" fill="#1a8fd8"/><path d="M3.7 6.9 L5.9 9.1 L9.9 4.7" fill="none" stroke="#fff" stroke-width="1.5" stroke-linecap="round" stroke-linejoin="round"/></svg>
<span class="t" style="top:334.29px;font-size:11.43px;line-height:15.43px;color:#222;right:874.20px;transform-origin:100% 50%;transform:scaleX(0.9669);-webkit-text-stroke:0.18px #222;">3,24</span>
<span class="t" style="top:334.29px;font-size:11.43px;line-height:15.43px;color:#222;right:816.00px;transform-origin:100% 50%;transform:scaleX(1.0093);-webkit-text-stroke:0.18px #222;">4</span>
<span class="t" style="top:334.29px;font-size:11.43px;line-height:15.43px;color:#222;left:936.00px;transform-origin:0 50%;transform:scaleX(0.9930);-webkit-text-stroke:0.18px #222;">bela</span>
<span class="t" style="top:334.29px;font-size:11.43px;line-height:15.43px;color:#222;right:728.60px;transform-origin:100% 50%;transform:scaleX(0.9827);-webkit-text-stroke:0.18px #222;">470,00</span>
<span class="t" style="top:334.29px;font-size:11.43px;line-height:15.43px;color:#222;right:662.70px;transform-origin:100% 50%;transform:scaleX(0.9801);-webkit-text-stroke:0.18px #222;">1 880,00</span>
<svg style="left:1121.7px;top:334.59999999999997px;" width="13.2" height="13.2" viewBox="0 0 13.2 13.2"><circle cx="6.6" cy="6.6" r="6.5" fill="#bdbdbd"/><path d="M4.3 4.3 L8.9 8.9 M8.9 4.3 L4.3 8.9" stroke="#fff" stroke-width="1.4" stroke-linecap="round"/></svg>
<span class="t" style="top:334.29px;font-size:11.43px;line-height:15.43px;color:#222;right:431.00px;transform-origin:100% 50%;transform:scaleX(1.0093);-webkit-text-stroke:0.18px #222;">0</span>
<span class="t" style="top:334.29px;font-size:11.43px;line-height:15.43px;color:#222;right:294.20px;transform-origin:100% 50%;transform:scaleX(0.9669);-webkit-text-stroke:0.18px #222;">3,24</span>
<span class="t" style="top:334.29px;font-size:11.43px;line-height:15.43px;color:#222;right:229.60px;transform-origin:100% 50%;transform:scaleX(0.9464);-webkit-text-stroke:0.18px #222;">-3,24</span>
<span class="t" style="top:334.29px;font-size:11.43px;line-height:15.43px;color:#222;left:1522.30px;transform-origin:0 50%;transform:scaleX(1.0023);-webkit-text-stroke:0.18px #222;">2.06.2025</span>
<div class="a" style="left:1585.3px;top:329.7px;width:43.7px;height:23.0px;overflow:hidden;"><span class="t" style="left:8px;top:4.60px;font-size:11.43px;line-height:15.43px;color:#222;-webkit-text-stroke:0.18px #222;transform-origin:0 50%;transform:scaleX(1.0);">9.06.2025</span></div>
<div class="a" style="left:78px;top:352.7px;width:40px;height:23.0px;background:#d5d0c9;"></div>
<div class="a" style="left:50px;top:375.2px;width:1579px;height:1px;background:#ebebeb;"></div>
<div class="a" style="left:58.6px;top:357.59999999999997px;width:13.2px;height:13.2px;background:#fff;border:1px solid #c6c6c6;border-radius:3px;"></div>
<span class="t" style="top:357.29px;font-size:11.43px;line-height:15.43px;color:#222;right:1626.80px;transform-origin:100% 50%;transform:scaleX(1.0093);-webkit-text-stroke:0.18px #222;">2</span>
<span class="t" style="top:357.29px;font-size:11.43px;line-height:15.43px;color:#222;left:124.90px;transform-origin:0 50%;transform:scaleX(0.9786);-webkit-text-stroke:0.18px #222;">Dzianina, czerń 822</span>
<span class="t" style="top:357.29px;font-size:11.43px;line-height:15.43px;color:#222;left:299.30px;transform-origin:0 50%;transform:scaleX(0.9262);-webkit-text-stroke:0.18px #222;">SZW_DZIAN-CZERN</span>
<span class="t" style="top:357.29px;font-size:11.43px;line-height:15.43px;color:#222;left:480.30px;transform-origin:0 50%;transform:scaleX(0.9780);-webkit-text-stroke:0.18px #222;">Soney Polska</span>
<span class="t" style="top:357.29px;font-size:11.43px;line-height:15.43px;color:#222;left:584.80px;transform-origin:0 50%;transform:scaleX(1.0101);-webkit-text-stroke:0.18px #222;">000002</span>
<svg style="left:679.6999999999999px;top:357.59999999999997px;" width="13.2" height="13.2" viewBox="0 0 13.2 13.2"><circle cx="6.6" cy="6.6" r="6.5" fill="#bdbdbd"/><path d="M4.3 4.3 L8.9 8.9 M8.9 4.3 L4.3 8.9" stroke="#fff" stroke-width="1.4" stroke-linecap="round"/></svg>
<svg style="left:736.5999999999999px;top:357.5px;" width="13.4" height="13.4" viewBox="0 0 13.4 13.4"><circle cx="6.7" cy="6.7" r="6.6" fill="#1a8fd8"/><path d="M3.7 6.9 L5.9 9.1 L9.9 4.7" fill="none" stroke="#fff" stroke-width="1.5" stroke-linecap="round" stroke-linejoin="round"/></svg>
<span class="t" style="top:357.29px;font-size:11.43px;line-height:15.43px;color:#222;right:874.20px;transform-origin:100% 50%;transform:scaleX(0.9669);-webkit-text-stroke:0.18px #222;">2,64</span>
<span class="t" style="top:357.29px;font-size:11.43px;line-height:15.43px;color:#222;right:816.00px;transform-origin:100% 50%;transform:scaleX(1.0093);-webkit-text-stroke:0.18px #222;">3</span>
<span class="t" style="top:357.29px;font-size:11.43px;line-height:15.43px;color:#222;left:936.00px;transform-origin:0 50%;transform:scaleX(0.9930);-webkit-text-stroke:0.18px #222;">bela</span>
<span class="t" style="top:357.29px;font-size:11.43px;line-height:15.43px;color:#222;right:728.60px;transform-origin:100% 50%;transform:scaleX(0.9827);-webkit-text-stroke:0.18px #222;">570,00</span>
<span class="t" style="top:357.29px;font-size:11.43px;line-height:15.43px;color:#222;right:662.70px;transform-origin:100% 50%;transform:scaleX(0.9801);-webkit-text-stroke:0.18px #222;">1 710,00</span>
<svg style="left:1121.7px;top:357.59999999999997px;" width="13.2" height="13.2" viewBox="0 0 13.2 13.2"><circle cx="6.6" cy="6.6" r="6.5" fill="#bdbdbd"/><path d="M4.3 4.3 L8.9 8.9 M8.9 4.3 L4.3 8.9" stroke="#fff" stroke-width="1.4" stroke-linecap="round"/></svg>
<span class="t" style="top:357.29px;font-size:11.43px;line-height:15.43px;color:#222;right:431.00px;transform-origin:100% 50%;transform:scaleX(0.9490);-webkit-text-stroke:0.18px #222;">0,6</span>
<span class="t" style="top:357.29px;font-size:11.43px;line-height:15.43px;color:#222;right:294.20px;transform-origin:100% 50%;transform:scaleX(0.9669);-webkit-text-stroke:0.18px #222;">3,24</span>
<span class="t" style="top:357.29px;font-size:11.43px;line-height:15.43px;color:#222;right:229.60px;transform-origin:100% 50%;transform:scaleX(0.9464);-webkit-text-stroke:0.18px #222;">-2,64</span>
<span class="t" style="top:357.29px;font-size:11.43px;line-height:15.43px;color:#222;left:1522.30px;transform-origin:0 50%;transform:scaleX(1.0023);-webkit-text-stroke:0.18px #222;">2.06.2025</span>
<div class="a" style="left:1585.3px;top:352.7px;width:43.7px;height:23.0px;overflow:hidden;"><span class="t" style="left:8px;top:4.60px;font-size:11.43px;line-height:15.43px;color:#222;-webkit-text-stroke:0.18px #222;transform-origin:0 50%;transform:scaleX(1.0);">9.06.2025</span></div>
<div class="a" style="left:78px;top:375.7px;width:40px;height:23.0px;background:#d5d0c9;"></div>
<div class="a" style="left:661px;top:376.2px;width:47px;height:22.0px;background:#ffb74d;"></div>
<div class="a" style="left:774.8px;top:376.2px;width:95px;height:22.0px;background:#ffb74d;"></div>
<div class="a" style="left:1514.3px;top:376.2px;width:71px;height:22.0px;background:#fbd4d4;"></div>
<div class="a" style="left:50px;top:398.2px;width:1579px;height:1px;background:#ebebeb;"></div>
<div class="a" style="left:58.6px;top:380.59999999999997px;width:13.2px;height:13.2px;background:#fff;border:1px solid #c6c6c6;border-radius:3px;"></div>
<span class="t" style="top:380.29px;font-size:11.43px;line-height:15.43px;color:#222;right:1626.80px;transform-origin:100% 50%;transform:scaleX(1.0093);-webkit-text-stroke:0.18px #222;">3</span>
<span class="t" style="top:380.29px;font-size:11.43px;line-height:15.43px;color:#222;left:124.90px;transform-origin:0 50%;transform:scaleX(0.9840);-webkit-text-stroke:0.18px #222;">Dzianina, czerwień 058</span>
<span class="t" style="top:380.29px;font-size:11.43px;line-height:15.43px;color:#222;left:299.30px;transform-origin:0 50%;transform:scaleX(0.9248);-webkit-text-stroke:0.18px #222;">SZW_DZIAN-CZERW</span>
<span class="t" style="top:380.29px;font-size:11.43px;line-height:15.43px;color:#222;left:480.30px;transform-origin:0 50%;transform:scaleX(0.9780);-webkit-text-stroke:0.18px #222;">Soney Polska</span>
<span class="t" style="top:380.29px;font-size:11.43px;line-height:15.43px;color:#222;left:584.80px;transform-origin:0 50%;transform:scaleX(1.0101);-webkit-text-stroke:0.18px #222;">000002</span>
<svg style="left:679.5999999999999px;top:380.5px;" width="13.4" height="13.4" viewBox="0 0 13.4 13.4"><circle cx="6.7" cy="6.7" r="6.6" fill="#1a8fd8"/><path d="M3.7 6.9 L5.9 9.1 L9.9 4.7" fill="none" stroke="#fff" stroke-width="1.5" stroke-linecap="round" stroke-linejoin="round"/></svg>
<svg style="left:736.5999999999999px;top:380.5px;" width="13.4" height="13.4" viewBox="0 0 13.4 13.4"><circle cx="6.7" cy="6.7" r="6.6" fill="#1a8fd8"/><path d="M3.7 6.9 L5.9 9.1 L9.9 4.7" fill="none" stroke="#fff" stroke-width="1.5" stroke-linecap="round" stroke-linejoin="round"/></svg>
<span class="t" style="top:380.29px;font-size:11.43px;line-height:15.43px;color:#222;right:874.20px;transform-origin:100% 50%;transform:scaleX(0.9669);-webkit-text-stroke:0.18px #222;">9,66</span>
<span class="t" style="top:380.29px;font-size:11.43px;line-height:15.43px;color:#222;right:816.00px;transform-origin:100% 50%;transform:scaleX(1.0093);-webkit-text-stroke:0.18px #222;">10</span>
<span class="t" style="top:380.29px;font-size:11.43px;line-height:15.43px;color:#222;left:936.00px;transform-origin:0 50%;transform:scaleX(0.9930);-webkit-text-stroke:0.18px #222;">bela</span>
<span class="t" style="top:380.29px;font-size:11.43px;line-height:15.43px;color:#222;right:728.60px;transform-origin:100% 50%;transform:scaleX(0.9827);-webkit-text-stroke:0.18px #222;">545,00</span>
<span class="t" style="top:380.29px;font-size:11.43px;line-height:15.43px;color:#222;right:662.70px;transform-origin:100% 50%;transform:scaleX(0.9801);-webkit-text-stroke:0.18px #222;">5 450,00</span>
<svg style="left:1121.7px;top:380.59999999999997px;" width="13.2" height="13.2" viewBox="0 0 13.2 13.2"><circle cx="6.6" cy="6.6" r="6.5" fill="#bdbdbd"/><path d="M4.3 4.3 L8.9 8.9 M8.9 4.3 L4.3 8.9" stroke="#fff" stroke-width="1.4" stroke-linecap="round"/></svg>
<span class="t" style="top:380.29px;font-size:11.43px;line-height:15.43px;color:#222;right:431.00px;transform-origin:100% 50%;transform:scaleX(0.9669);-webkit-text-stroke:0.18px #222;">0,78</span>
<span class="t" style="top:380.29px;font-size:11.43px;line-height:15.43px;color:#222;right:294.20px;transform-origin:100% 50%;transform:scaleX(0.9763);-webkit-text-stroke:0.18px #222;">10,44</span>
<span class="t" style="top:380.29px;font-size:11.43px;line-height:15.43px;color:#222;right:229.60px;transform-origin:100% 50%;transform:scaleX(0.9464);-webkit-text-stroke:0.18px #222;">-9,66</span>
<span class="t" style="top:380.29px;font-size:11.43px;line-height:15.43px;color:#222;left:1522.30px;transform-origin:0 50%;transform:scaleX(1.0023);-webkit-text-stroke:0.18px #222;">2.06.2025</span>
<div class="a" style="left:1585.3px;top:375.7px;width:43.7px;height:23.0px;overflow:hidden;"><span class="t" style="left:8px;top:4.60px;font-size:11.43px;line-height:15.43px;color:#222;-webkit-text-stroke:0.18px #222;transform-origin:0 50%;transform:scaleX(1.0);">9.06.2025</span></div>
<div class="a" style="left:78px;top:398.7px;width:40px;height:23.0px;background:#d5d0c9;"></div>
<div class="a" style="left:50px;top:421.2px;width:1579px;height:1px;background:#ebebeb;"></div>
<div class="a" style="left:58.6px;top:403.59999999999997px;width:13.2px;height:13.2px;background:#fff;border:1px solid #c6c6c6;border-radius:3px;"></div>
<span class="t" style="top:403.29px;font-size:11.43px;line-height:15.43px;color:#222;right:1626.80px;transform-origin:100% 50%;transform:scaleX(1.0093);-webkit-text-stroke:0.18px #222;">4</span>
<span class="t" style="top:403.29px;font-size:11.43px;line-height:15.43px;color:#222;left:124.90px;transform-origin:0 50%;transform:scaleX(0.9864);-webkit-text-stroke:0.18px #222;">Dzianina, ecru 115</span>
<span class="t" style="top:403.29px;font-size:11.43px;line-height:15.43px;color:#222;left:299.30px;transform-origin:0 50%;transform:scaleX(0.9152);-webkit-text-stroke:0.18px #222;">SZW_DZIAN-ECRU</span>
<span class="t" style="top:403.29px;font-size:11.43px;line-height:15.43px;color:#222;left:480.30px;transform-origin:0 50%;transform:scaleX(0.9780);-webkit-text-stroke:0.18px #222;">Soney Polska</span>
<span class="t" style="top:403.29px;font-size:11.43px;line-height:15.43px;color:#222;left:584.80px;transform-origin:0 50%;transform:scaleX(1.0101);-webkit-text-stroke:0.18px #222;">000002</span>
<svg style="left:679.6999999999999px;top:403.59999999999997px;" width="13.2" height="13.2" viewBox="0 0 13.2 13.2"><circle cx="6.6" cy="6.6" r="6.5" fill="#bdbdbd"/><path d="M4.3 4.3 L8.9 8.9 M8.9 4.3 L4.3 8.9" stroke="#fff" stroke-width="1.4" stroke-linecap="round"/></svg>
<svg style="left:736.5999999999999px;top:403.5px;" width="13.4" height="13.4" viewBox="0 0 13.4 13.4"><circle cx="6.7" cy="6.7" r="6.6" fill="#1a8fd8"/><path d="M3.7 6.9 L5.9 9.1 L9.9 4.7" fill="none" stroke="#fff" stroke-width="1.5" stroke-linecap="round" stroke-linejoin="round"/></svg>
<span class="t" style="top:403.29px;font-size:11.43px;line-height:15.43px;color:#222;right:874.20px;transform-origin:100% 50%;transform:scaleX(0.9669);-webkit-text-stroke:0.18px #222;">2,37</span>
<span class="t" style="top:403.29px;font-size:11.43px;line-height:15.43px;color:#222;right:816.00px;transform-origin:100% 50%;transform:scaleX(1.0093);-webkit-text-stroke:0.18px #222;">3</span>
<span class="t" style="top:403.29px;font-size:11.43px;line-height:15.43px;color:#222;left:936.00px;transform-origin:0 50%;transform:scaleX(0.9930);-webkit-text-stroke:0.18px #222;">bela</span>
<span class="t" style="top:403.29px;font-size:11.43px;line-height:15.43px;color:#222;right:728.60px;transform-origin:100% 50%;transform:scaleX(0.9827);-webkit-text-stroke:0.18px #222;">510,00</span>
<span class="t" style="top:403.29px;font-size:11.43px;line-height:15.43px;color:#222;right:662.70px;transform-origin:100% 50%;transform:scaleX(0.9801);-webkit-text-stroke:0.18px #222;">1 530,00</span>
<svg style="left:1121.7px;top:403.59999999999997px;" width="13.2" height="13.2" viewBox="0 0 13.2 13.2"><circle cx="6.6" cy="6.6" r="6.5" fill="#bdbdbd"/><path d="M4.3 4.3 L8.9 8.9 M8.9 4.3 L4.3 8.9" stroke="#fff" stroke-width="1.4" stroke-linecap="round"/></svg>
<span class="t" style="top:403.29px;font-size:11.43px;line-height:15.43px;color:#222;right:431.00px;transform-origin:100% 50%;transform:scaleX(0.9669);-webkit-text-stroke:0.18px #222;">0,87</span>
<span class="t" style="top:403.29px;font-size:11.43px;line-height:15.43px;color:#222;right:294.20px;transform-origin:100% 50%;transform:scaleX(0.9669);-webkit-text-stroke:0.18px #222;">3,24</span>
<span class="t" style="top:403.29px;font-size:11.43px;line-height:15.43px;color:#222;right:229.60px;transform-origin:100% 50%;transform:scaleX(0.9464);-webkit-text-stroke:0.18px #222;">-2,37</span>
<span class="t" style="top:403.29px;font-size:11.43px;line-height:15.43px;color:#222;left:1522.30px;transform-origin:0 50%;transform:scaleX(1.0023);-webkit-text-stroke:0.18px #222;">2.06.2025</span>
<div class="a" style="left:1585.3px;top:398.7px;width:43.7px;height:23.0px;overflow:hidden;"><span class="t" style="left:8px;top:4.60px;font-size:11.43px;line-height:15.43px;color:#222;-webkit-text-stroke:0.18px #222;transform-origin:0 50%;transform:scaleX(1.0);">9.06.2025</span></div>
<div class="a" style="left:78px;top:421.7px;width:40px;height:23.0px;background:#d5d0c9;"></div>
<div class="a" style="left:661px;top:422.2px;width:47px;height:22.0px;background:#ffb74d;"></div>
<div class="a" style="left:774.8px;top:422.2px;width:95px;height:22.0px;background:#ffb74d;"></div>
<div class="a" style="left:1514.3px;top:422.2px;width:71px;height:22.0px;background:#fbd4d4;"></div>
<div class="a" style="left:50px;top:444.2px;width:1579px;height:1px;background:#ebebeb;"></div>
<div class="a" style="left:58.6px;top:426.59999999999997px;width:13.2px;height:13.2px;background:#fff;border:1px solid #c6c6c6;border-radius:3px;"></div>
<span class="t" style="top:426.29px;font-size:11.43px;line-height:15.43px;color:#222;right:1626.80px;transform-origin:100% 50%;transform:scaleX(1.0093);-webkit-text-stroke:0.18px #222;">5</span>
<span class="t" style="top:426.29px;font-size:11.43px;line-height:15.43px;color:#222;left:124.90px;transform-origin:0 50%;transform:scaleX(0.9887);-webkit-text-stroke:0.18px #222;">Dzianina, zieleń 023 w gwiazdki</span>
<span class="t" style="top:426.29px;font-size:11.43px;line-height:15.43px;color:#222;left:299.30px;transform-origin:0 50%;transform:scaleX(0.9340);-webkit-text-stroke:0.18px #222;">SZW_DZIAN-ZIEL</span>
<span class="t" style="top:426.29px;font-size:11.43px;line-height:15.43px;color:#222;left:480.30px;transform-origin:0 50%;transform:scaleX(0.9780);-webkit-text-stroke:0.18px #222;">Soney Polska</span>
<span class="t" style="top:426.29px;font-size:11.43px;line-height:15.43px;color:#222;left:584.80px;transform-origin:0 50%;transform:scaleX(1.0101);-webkit-text-stroke:0.18px #222;">000002</span>
<svg style="left:679.5999999999999px;top:426.5px;" width="13.4" height="13.4" viewBox="0 0 13.4 13.4"><circle cx="6.7" cy="6.7" r="6.6" fill="#1a8fd8"/><path d="M3.7 6.9 L5.9 9.1 L9.9 4.7" fill="none" stroke="#fff" stroke-width="1.5" stroke-linecap="round" stroke-linejoin="round"/></svg>
<svg style="left:736.5999999999999px;top:426.5px;" width="13.4" height="13.4" viewBox="0 0 13.4 13.4"><circle cx="6.7" cy="6.7" r="6.6" fill="#1a8fd8"/><path d="M3.7 6.9 L5.9 9.1 L9.9 4.7" fill="none" stroke="#fff" stroke-width="1.5" stroke-linecap="round" stroke-linejoin="round"/></svg>
<span class="t" style="top:426.29px;font-size:11.43px;line-height:15.43px;color:#222;right:874.20px;transform-origin:100% 50%;transform:scaleX(0.9827);-webkit-text-stroke:0.18px #222;">10,045</span>
<span class="t" style="top:426.29px;font-size:11.43px;line-height:15.43px;color:#222;right:816.00px;transform-origin:100% 50%;transform:scaleX(1.0824);-webkit-text-stroke:0.18px #222;">11</span>
<span class="t" style="top:426.29px;font-size:11.43px;line-height:15.43px;color:#222;left:936.00px;transform-origin:0 50%;transform:scaleX(0.9930);-webkit-text-stroke:0.18px #222;">bela</span>
<span class="t" style="top:426.29px;font-size:11.43px;line-height:15.43px;color:#222;right:728.60px;transform-origin:100% 50%;transform:scaleX(0.9827);-webkit-text-stroke:0.18px #222;">530,00</span>
<span class="t" style="top:426.29px;font-size:11.43px;line-height:15.43px;color:#222;right:662.70px;transform-origin:100% 50%;transform:scaleX(0.9801);-webkit-text-stroke:0.18px #222;">5 830,00</span>
<svg style="left:1121.7px;top:426.59999999999997px;" width="13.2" height="13.2" viewBox="0 0 13.2 13.2"><circle cx="6.6" cy="6.6" r="6.5" fill="#bdbdbd"/><path d="M4.3 4.3 L8.9 8.9 M8.9 4.3 L4.3 8.9" stroke="#fff" stroke-width="1.4" stroke-linecap="round"/></svg>
<span class="t" style="top:426.29px;font-size:11.43px;line-height:15.43px;color:#222;right:431.00px;transform-origin:100% 50%;transform:scaleX(0.9763);-webkit-text-stroke:0.18px #222;">0,395</span>
<span class="t" style="top:426.29px;font-size:11.43px;line-height:15.43px;color:#222;right:294.20px;transform-origin:100% 50%;transform:scaleX(0.9763);-webkit-text-stroke:0.18px #222;">10,44</span>
<span class="t" style="top:426.29px;font-size:11.43px;line-height:15.43px;color:#222;right:229.60px;transform-origin:100% 50%;transform:scaleX(0.9674);-webkit-text-stroke:0.18px #222;">-10,045</span>
<span class="t" style="top:426.29px;font-size:11.43px;line-height:15.43px;color:#222;left:1522.30px;transform-origin:0 50%;transform:scaleX(1.0023);-webkit-text-stroke:0.18px #222;">2.06.2025</span>
<div class="a" style="left:1585.3px;top:421.7px;width:43.7px;height:23.0px;overflow:hidden;"><span class="t" style="left:8px;top:4.60px;font-size:11.43px;line-height:15.43px;color:#222;-webkit-text-stroke:0.18px #222;transform-origin:0 50%;transform:scaleX(1.0);">9.06.2025</span></div>
<div class="a" style="left:78px;top:444.7px;width:40px;height:23.0px;background:#d5d0c9;"></div>
<div class="a" style="left:50px;top:467.2px;width:1579px;height:1px;background:#ebebeb;"></div>
<div class="a" style="left:58.6px;top:449.59999999999997px;width:13.2px;height:13.2px;background:#fff;border:1px solid #c6c6c6;border-radius:3px;"></div>
<span class="t" style="top:449.29px;font-size:11.43px;line-height:15.43px;color:#222;right:1626.80px;transform-origin:100% 50%;transform:scaleX(1.0093);-webkit-text-stroke:0.18px #222;">6</span>
<span class="t" style="top:449.29px;font-size:11.43px;line-height:15.43px;color:#222;left:124.90px;transform-origin:0 50%;transform:scaleX(0.9772);-webkit-text-stroke:0.18px #222;">Guzik, koral 052</span>
<span class="t" style="top:449.29px;font-size:11.43px;line-height:15.43px;color:#222;left:299.30px;transform-origin:0 50%;transform:scaleX(0.9166);-webkit-text-stroke:0.18px #222;">SZW_GUZIK-KORAL</span>
<span class="t" style="top:449.29px;font-size:11.43px;line-height:15.43px;color:#222;left:480.30px;transform-origin:0 50%;transform:scaleX(0.9878);-webkit-text-stroke:0.18px #222;">Ricon Polska</span>
<span class="t" style="top:449.29px;font-size:11.43px;line-height:15.43px;color:#222;left:584.80px;transform-origin:0 50%;transform:scaleX(1.0101);-webkit-text-stroke:0.18px #222;">000007</span>
<svg style="left:679.6999999999999px;top:449.59999999999997px;" width="13.2" height="13.2" viewBox="0 0 13.2 13.2"><circle cx="6.6" cy="6.6" r="6.5" fill="#bdbdbd"/><path d="M4.3 4.3 L8.9 8.9 M8.9 4.3 L4.3 8.9" stroke="#fff" stroke-width="1.4" stroke-linecap="round"/></svg>
<svg style="left:736.5999999999999px;top:449.5px;" width="13.4" height="13.4" viewBox="0 0 13.4 13.4"><circle cx="6.7" cy="6.7" r="6.6" fill="#1a8fd8"/><path d="M3.7 6.9 L5.9 9.1 L9.9 4.7" fill="none" stroke="#fff" stroke-width="1.5" stroke-linecap="round" stroke-linejoin="round"/></svg>
<span class="t" style="top:449.29px;font-size:11.43px;line-height:15.43px;color:#222;right:874.20px;transform-origin:100% 50%;transform:scaleX(1.0093);-webkit-text-stroke:0.18px #222;">16</span>
<span class="t" style="top:449.29px;font-size:11.43px;line-height:15.43px;color:#222;right:816.00px;transform-origin:100% 50%;transform:scaleX(1.0093);-webkit-text-stroke:0.18px #222;">16</span>
<span class="t" style="top:449.29px;font-size:11.43px;line-height:15.43px;color:#222;left:936.00px;transform-origin:0 50%;transform:scaleX(1.0206);-webkit-text-stroke:0.18px #222;">gros</span>
<span class="t" style="top:449.29px;font-size:11.43px;line-height:15.43px;color:#222;right:728.60px;transform-origin:100% 50%;transform:scaleX(0.9827);-webkit-text-stroke:0.18px #222;">151,20</span>
<span class="t" style="top:449.29px;font-size:11.43px;line-height:15.43px;color:#222;right:662.70px;transform-origin:100% 50%;transform:scaleX(0.9801);-webkit-text-stroke:0.18px #222;">2 419,20</span>
<svg style="left:1121.7px;top:449.59999999999997px;" width="13.2" height="13.2" viewBox="0 0 13.2 13.2"><circle cx="6.6" cy="6.6" r="6.5" fill="#bdbdbd"/><path d="M4.3 4.3 L8.9 8.9 M8.9 4.3 L4.3 8.9" stroke="#fff" stroke-width="1.4" stroke-linecap="round"/></svg>
<span class="t" style="top:449.29px;font-size:11.43px;line-height:15.43px;color:#222;right:431.00px;transform-origin:100% 50%;transform:scaleX(1.0093);-webkit-text-stroke:0.18px #222;">1</span>
<span class="t" style="top:449.29px;font-size:11.43px;line-height:15.43px;color:#222;right:294.20px;transform-origin:100% 50%;transform:scaleX(1.0093);-webkit-text-stroke:0.18px #222;">17</span>
<span class="t" style="top:449.29px;font-size:11.43px;line-height:15.43px;color:#222;right:229.60px;transform-origin:100% 50%;transform:scaleX(0.9682);-webkit-text-stroke:0.18px #222;">-16</span>
<span class="t" style="top:449.29px;font-size:11.43px;line-height:15.43px;color:#222;left:1522.30px;transform-origin:0 50%;transform:scaleX(1.0023);-webkit-text-stroke:0.18px #222;">2.06.2025</span>
<div class="a" style="left:1585.3px;top:444.7px;width:43.7px;height:23.0px;overflow:hidden;"><span class="t" style="left:8px;top:4.60px;font-size:11.43px;line-height:15.43px;color:#222;-webkit-text-stroke:0.18px #222;transform-origin:0 50%;transform:scaleX(1.0);">9.06.2025</span></div>
<div class="a" style="left:78px;top:467.7px;width:40px;height:23.0px;background:#d5d0c9;"></div>
<div class="a" style="left:50px;top:490.2px;width:1579px;height:1px;background:#ebebeb;"></div>
<div class="a" style="left:58.6px;top:472.59999999999997px;width:13.2px;height:13.2px;background:#fff;border:1px solid #c6c6c6;border-radius:3px;"></div>
<span class="t" style="top:472.29px;font-size:11.43px;line-height:15.43px;color:#222;right:1626.80px;transform-origin:100% 50%;transform:scaleX(1.0093);-webkit-text-stroke:0.18px #222;">7</span>
<span class="t" style="top:472.29px;font-size:11.43px;line-height:15.43px;color:#222;left:124.90px;transform-origin:0 50%;transform:scaleX(0.9828);-webkit-text-stroke:0.18px #222;">Guzik, turkus 028</span>
<span class="t" style="top:472.29px;font-size:11.43px;line-height:15.43px;color:#222;left:299.30px;transform-origin:0 50%;transform:scaleX(0.9142);-webkit-text-stroke:0.18px #222;">SZW_GUZIK-TURK</span>
<span class="t" style="top:472.29px;font-size:11.43px;line-height:15.43px;color:#222;left:480.30px;transform-origin:0 50%;transform:scaleX(0.9878);-webkit-text-stroke:0.18px #222;">Ricon Polska</span>
<span class="t" style="top:472.29px;font-size:11.43px;line-height:15.43px;color:#222;left:584.80px;transform-origin:0 50%;transform:scaleX(1.0101);-webkit-text-stroke:0.18px #222;">000007</span>
<svg style="left:679.6999999999999px;top:472.59999999999997px;" width="13.2" height="13.2" viewBox="0 0 13.2 13.2"><circle cx="6.6" cy="6.6" r="6.5" fill="#bdbdbd"/><path d="M4.3 4.3 L8.9 8.9 M8.9 4.3 L4.3 8.9" stroke="#fff" stroke-width="1.4" stroke-linecap="round"/></svg>
<svg style="left:736.5999999999999px;top:472.5px;" width="13.4" height="13.4" viewBox="0 0 13.4 13.4"><circle cx="6.7" cy="6.7" r="6.6" fill="#1a8fd8"/><path d="M3.7 6.9 L5.9 9.1 L9.9 4.7" fill="none" stroke="#fff" stroke-width="1.5" stroke-linecap="round" stroke-linejoin="round"/></svg>
<span class="t" style="top:472.29px;font-size:11.43px;line-height:15.43px;color:#222;right:874.20px;transform-origin:100% 50%;transform:scaleX(0.9669);-webkit-text-stroke:0.18px #222;">13,2</span>
<span class="t" style="top:472.29px;font-size:11.43px;line-height:15.43px;color:#222;right:816.00px;transform-origin:100% 50%;transform:scaleX(1.0093);-webkit-text-stroke:0.18px #222;">14</span>
<span class="t" style="top:472.29px;font-size:11.43px;line-height:15.43px;color:#222;left:936.00px;transform-origin:0 50%;transform:scaleX(1.0206);-webkit-text-stroke:0.18px #222;">gros</span>
<span class="t" style="top:472.29px;font-size:11.43px;line-height:15.43px;color:#222;right:728.60px;transform-origin:100% 50%;transform:scaleX(0.9827);-webkit-text-stroke:0.18px #222;">165,60</span>
<span class="t" style="top:472.29px;font-size:11.43px;line-height:15.43px;color:#222;right:662.70px;transform-origin:100% 50%;transform:scaleX(0.9801);-webkit-text-stroke:0.18px #222;">2 318,40</span>
<svg style="left:1121.7px;top:472.59999999999997px;" width="13.2" height="13.2" viewBox="0 0 13.2 13.2"><circle cx="6.6" cy="6.6" r="6.5" fill="#bdbdbd"/><path d="M4.3 4.3 L8.9 8.9 M8.9 4.3 L4.3 8.9" stroke="#fff" stroke-width="1.4" stroke-linecap="round"/></svg>
<span class="t" style="top:472.29px;font-size:11.43px;line-height:15.43px;color:#222;right:431.00px;transform-origin:100% 50%;transform:scaleX(1.0093);-webkit-text-stroke:0.18px #222;">0</span>
<span class="t" style="top:472.29px;font-size:11.43px;line-height:15.43px;color:#222;right:294.20px;transform-origin:100% 50%;transform:scaleX(1.0093);-webkit-text-stroke:0.18px #222;">13</span>
<span class="t" style="top:472.29px;font-size:11.43px;line-height:15.43px;color:#222;right:229.60px;transform-origin:100% 50%;transform:scaleX(0.9682);-webkit-text-stroke:0.18px #222;">-13</span>
<span class="t" style="top:472.29px;font-size:11.43px;line-height:15.43px;color:#222;left:1522.30px;transform-origin:0 50%;transform:scaleX(1.0023);-webkit-text-stroke:0.18px #222;">2.06.2025</span>
<div class="a" style="left:1585.3px;top:467.7px;width:43.7px;height:23.0px;overflow:hidden;"><span class="t" style="left:8px;top:4.60px;font-size:11.43px;line-height:15.43px;color:#222;-webkit-text-stroke:0.18px #222;transform-origin:0 50%;transform:scaleX(1.0);">9.06.2025</span></div>
<div class="a" style="left:50px;top:421.0px;width:1579px;height:1.1px;background:#555;"></div>
<div class="a" style="left:50px;top:443.9px;width:1579px;height:1.4px;background:#777;"></div>
<div class="a" style="left:50px;top:420.9px;width:2.8px;height:24.6px;background:#1a78b8;"></div>
<div class="a" style="left:291.5px;top:421.2px;width:126.8px;height:23.8px;border:2px solid #1a78b8;"></div>
<div class="a" style="left:50px;top:530.8px;width:1579px;height:1px;background:#e6e6e6;"></div>
<div class="a" style="left:62.1px;top:535.2px;width:1428.7px;height:7.6px;background:#e4e4e4;border-radius:3.8px;"></div>
<svg style="left:53.6px;top:535px;" width="6" height="8" viewBox="0 0 6 8"><path d="M4.6 0.8 L1.2 4 L4.6 7.2" fill="none" stroke="#dadada" stroke-width="1"/></svg>
<svg style="left:1620.6px;top:535px;" width="6" height="8" viewBox="0 0 6 8"><path d="M1.4 0.8 L4.8 4 L1.4 7.2" fill="none" stroke="#dadada" stroke-width="1"/></svg>
<div class="a" style="left:53.2px;top:560px;width:2px;height:2px;background:#444;border-radius:50%;"></div>
<div class="a" style="left:53.2px;top:564px;width:2px;height:2px;background:#444;border-radius:50%;"></div>
<div class="a" style="left:53.2px;top:568px;width:2px;height:2px;background:#444;border-radius:50%;"></div>
<svg style="left:73.6px;top:559.3px;" width="8" height="11" viewBox="0 0 8 11"><path d="M6.4 1 L1.6 5.4 L6.4 9.8" fill="none" stroke="#dcdcdc" stroke-width="1.2" stroke-linecap="round" stroke-linejoin="round"/></svg>
<div class="a" style="left:87.7px;top:553.3px;width:187.3px;height:26px;background:#fff;border-radius:8px 8px 0 0;"></div>
<svg style="left:79.7px;top:571px;" width="8" height="8" viewBox="0 0 8 8"><path d="M8 0 V8 H0 Q8 8 8 0 Z" fill="#fff"/></svg>
<svg style="left:275px;top:571px;" width="8" height="8" viewBox="0 0 8 8"><path d="M0 0 V8 H8 Q0 8 0 0 Z" fill="#fff"/></svg>
<span class="t" style="top:558.08px;font-size:11.43px;line-height:15.43px;color:#222;left:105.70px;transform-origin:0 50%;transform:scaleX(1.0250);-webkit-text-stroke:0.42px #222;">Stan prognozowany dla linijki</span>
<div class="a" style="left:232px;top:556px;width:30px;height:18px;background:linear-gradient(90deg,rgba(255,255,255,0) 0%,rgba(255,255,255,0.8) 70%,rgba(255,255,255,0.85) 100%);"></div>
<div class="a" style="left:102px;top:576.3px;width:158.7px;height:2px;background:#1a8fd8;border-radius:1px;"></div>
<span class="t" style="top:558.08px;font-size:11.43px;line-height:15.43px;color:#484848;left:293.30px;transform-origin:0 50%;transform:scaleX(1.0128);-webkit-text-stroke:0.42px #484848;">Wykres sprzedaży w układzie miesięcznym</span>
<div class="a" style="left:478px;top:556px;width:40px;height:18px;background:linear-gradient(90deg,rgba(240,240,240,0) 0%,rgba(240,240,240,0.8) 70%,rgba(240,240,240,0.85) 100%);"></div>
<span class="t" style="top:558.08px;font-size:11.43px;line-height:15.43px;color:#484848;left:553.30px;transform-origin:0 50%;transform:scaleX(1.0144);-webkit-text-stroke:0.42px #484848;">Wykres sprzedaży w układzie tygodniowym</span>
<div class="a" style="left:739px;top:556px;width:40px;height:18px;background:linear-gradient(90deg,rgba(240,240,240,0) 0%,rgba(240,240,240,0.8) 70%,rgba(240,240,240,0.85) 100%);"></div>
<span class="t" style="top:558.08px;font-size:11.43px;line-height:15.43px;color:#555;left:814.70px;transform-origin:0 50%;transform:scaleX(0.9925);-webkit-text-stroke:0.18px #555;">Wykres cyklu modelu</span>
<span class="t" style="top:558.08px;font-size:11.43px;line-height:15.43px;color:#555;left:958.00px;transform-origin:0 50%;transform:scaleX(0.9986);-webkit-text-stroke:0.18px #555;">Parametry linijek</span>
<span class="t" style="top:558.08px;font-size:11.43px;line-height:15.43px;color:#555;left:1078.30px;transform-origin:0 50%;transform:scaleX(1.0153);-webkit-text-stroke:0.18px #555;">Historia zmian linijek</span>
<span class="t" style="top:558.08px;font-size:11.43px;line-height:15.43px;color:#555;left:1219.30px;transform-origin:0 50%;transform:scaleX(0.9976);-webkit-text-stroke:0.18px #555;">Szczegóły propozycji</span>
<span class="t" style="top:558.08px;font-size:11.43px;line-height:15.43px;color:#555;left:1363.30px;transform-origin:0 50%;transform:scaleX(1.0126);-webkit-text-stroke:0.18px #555;">Współczynniki linijek propozycji</span>
<div class="a" style="left:1566.7px;top:555px;width:52.6px;height:20px;overflow:hidden;"><span class="t" style="left:0;top:3.1px;font-size:11.43px;line-height:15.43px;color:#555;-webkit-text-stroke:0.18px #555;transform-origin:0 50%;transform:scaleX(0.955);">Konfiguracja</span></div>
<svg style="left:1626px;top:559.3px;" width="8" height="11" viewBox="0 0 8 11"><path d="M1.6 1 L6.4 5.4 L1.6 9.8" fill="none" stroke="#9a9a9a" stroke-width="1.2" stroke-linecap="round" stroke-linejoin="round"/></svg>
<svg style="left:0;top:0" width="1740" height="996" viewBox="0 0 1740 996"><path d="M57.80 595.10 V589.50 H67.80 V595.10" fill="none" stroke="#444" stroke-width="1.3" stroke-linejoin="round" stroke-linecap="round" /></svg>
<svg style="left:0;top:0" width="1740" height="996" viewBox="0 0 1740 996"><path d="M57.80 603.00 H55.30 Q54.30 603.00 54.30 602.00 V596.10 Q54.30 595.10 55.30 595.10 H69.70 Q70.70 595.10 70.70 596.10 V602.00 Q70.70 603.00 69.70 603.00 H67.80" fill="none" stroke="#6a6a6a" stroke-width="1.3" stroke-linejoin="round" stroke-linecap="round" /></svg>
<svg style="left:0;top:0" width="1740" height="996" viewBox="0 0 1740 996"><path d="M57.80 599.10 H67.80 V605.90 H57.80 Z" fill="#fff" stroke="#444" stroke-width="1.3" stroke-linejoin="round" stroke-linecap="round" /></svg>
<svg style="left:0;top:0" width="1740" height="996" viewBox="0 0 1740 996"><path d="M60.20 601.70 H65.70 M60.20 603.60 H65.70" fill="none" stroke="#666" stroke-width="0.9" stroke-linejoin="round" stroke-linecap="round" /></svg>
<div class="a" style="left:56.5px;top:596.7px;width:1.9px;height:1.2px;background:#3aa0e0;"></div>
<svg style="left:79.3px;top:595.3px;" width="8" height="6" viewBox="0 0 8 6"><path d="M1 1 L4.0 3.8 L7 1" fill="none" stroke="#333" stroke-width="1.6" stroke-linecap="round" stroke-linejoin="round"/></svg>
<svg style="left:1528px;top:589px;" width="18" height="18" viewBox="0 0 18 18"><g fill="none" stroke="#444" stroke-width="1.2" stroke-linejoin="round"><path d="M8 15.6 H1 V1 H15.6 V8"/><path d="M1 3.6 H15.6" stroke-width="1.6"/><circle cx="11.4" cy="11.4" r="3.2"/><path d="M13.8 13.8 L16.6 16.6" stroke-linecap="round"/></g></svg>
<span class="t" style="top:590.78px;font-size:11.43px;line-height:15.43px;color:#222;left:1549.00px;transform-origin:0 50%;transform:scaleX(0.9780);-webkit-text-stroke:0.18px #222;">Podgląd</span>
<svg style="left:0;top:0" width="1740" height="996" viewBox="0 0 1740 996"><path d="M1604.20 596.50 A8.2 8.2 0 0 1 1620.00 594.70 M1620.20 589.70 V594.90 H1615.00 M1620.20 599.50 A8.2 8.2 0 0 1 1604.70 600.60 M1604.50 605.80 V600.40 H1609.60" fill="none" stroke="#333" stroke-width="1.2" stroke-linejoin="round" stroke-linecap="round" /></svg>
<div class="a" style="left:50px;top:618px;width:1579px;height:1px;background:#e6e6e6;"></div>
<div class="a" style="left:1574.3px;top:612.1px;width:27px;height:13.1px;background:#fff;border:1px solid #e2e2e2;border-radius:7px;"></div>
<svg style="left:1582.5px;top:615.4px;" width="11" height="7" viewBox="0 0 11 7"><path d="M1 1.2 L5.4 5.4 L9.8 1.2" fill="none" stroke="#999" stroke-width="1.2" stroke-linecap="round" stroke-linejoin="round"/></svg>
<svg style="left:0;top:0" width="1740" height="996" viewBox="0 0 1740 996"><path d="M157.6 882.40 H1290.8" stroke="#808080" stroke-width="0.9" stroke-dasharray="3.1 2.1" fill="none"/><path d="M157.6 870.50 H1290.8" stroke="#808080" stroke-width="0.9" stroke-dasharray="3.1 2.1" fill="none"/><path d="M157.6 859.00 H1290.8" stroke="#808080" stroke-width="0.9" stroke-dasharray="3.1 2.1" fill="none"/><path d="M157.6 846.80 H1290.8" stroke="#808080" stroke-width="0.9" stroke-dasharray="3.1 2.1" fill="none"/><path d="M157.6 834.60 H1290.8" stroke="#808080" stroke-width="0.9" stroke-dasharray="3.1 2.1" fill="none"/><path d="M157.6 822.14 H1290.8" stroke="#808080" stroke-width="0.9" stroke-dasharray="3.1 2.1" fill="none"/><path d="M157.6 810.19 H1290.8" stroke="#808080" stroke-width="0.9" stroke-dasharray="3.1 2.1" fill="none"/><path d="M157.6 798.59 H1290.8" stroke="#808080" stroke-width="0.9" stroke-dasharray="3.1 2.1" fill="none"/><path d="M157.6 786.30 H1290.8" stroke="#808080" stroke-width="0.9" stroke-dasharray="3.1 2.1" fill="none"/><path d="M157.6 774.69 H1290.8" stroke="#808080" stroke-width="0.9" stroke-dasharray="3.1 2.1" fill="none"/><path d="M157.6 762.40 H1290.8" stroke="#808080" stroke-width="0.9" stroke-dasharray="3.1 2.1" fill="none"/><path d="M157.6 750.80 H1290.8" stroke="#808080" stroke-width="0.9" stroke-dasharray="3.1 2.1" fill="none"/><path d="M157.6 738.17 H1290.8" stroke="#808080" stroke-width="0.9" stroke-dasharray="3.1 2.1" fill="none"/><path d="M157.6 725.37 H1290.8" stroke="#808080" stroke-width="0.9" stroke-dasharray="3.1 2.1" fill="none"/><path d="M157.6 714.27 H1290.8" stroke="#808080" stroke-width="0.9" stroke-dasharray="3.1 2.1" fill="none"/><path d="M157.6 701.47 H1290.8" stroke="#808080" stroke-width="0.9" stroke-dasharray="3.1 2.1" fill="none"/><path d="M157.6 690.38 H1290.8" stroke="#808080" stroke-width="0.9" stroke-dasharray="3.1 2.1" fill="none"/><path d="M157.6 677.58 H1290.8" stroke="#808080" stroke-width="0.9" stroke-dasharray="3.1 2.1" fill="none"/><path d="M209.40 677.58 V882.40" stroke="#808080" stroke-width="0.9" stroke-dasharray="3.1 2.1" fill="none"/><path d="M312.54 677.58 V882.40" stroke="#808080" stroke-width="0.9" stroke-dasharray="3.1 2.1" fill="none"/><path d="M415.68 677.58 V882.40" stroke="#808080" stroke-width="0.9" stroke-dasharray="3.1 2.1" fill="none"/><path d="M518.82 677.58 V882.40" stroke="#808080" stroke-width="0.9" stroke-dasharray="3.1 2.1" fill="none"/><path d="M621.96 677.58 V882.40" stroke="#808080" stroke-width="0.9" stroke-dasharray="3.1 2.1" fill="none"/><path d="M725.10 677.58 V882.40" stroke="#808080" stroke-width="0.9" stroke-dasharray="3.1 2.1" fill="none"/><path d="M828.24 677.58 V882.40" stroke="#808080" stroke-width="0.9" stroke-dasharray="3.1 2.1" fill="none"/><path d="M931.38 677.58 V882.40" stroke="#808080" stroke-width="0.9" stroke-dasharray="3.1 2.1" fill="none"/><path d="M1034.52 677.58 V882.40" stroke="#808080" stroke-width="0.9" stroke-dasharray="3.1 2.1" fill="none"/><path d="M1137.66 677.58 V882.40" stroke="#808080" stroke-width="0.9" stroke-dasharray="3.1 2.1" fill="none"/><path d="M1240.80 677.58 V882.40" stroke="#808080" stroke-width="0.9" stroke-dasharray="3.1 2.1" fill="none"/><path d="M142.5 677.58 V882.40" stroke="#9a9a9a" stroke-width="1.2" fill="none"/><path d="M137 882.40 H142.5" stroke="#9a9a9a" stroke-width="1.1"/><path d="M137 870.50 H142.5" stroke="#9a9a9a" stroke-width="1.1"/><path d="M137 859.00 H142.5" stroke="#9a9a9a" stroke-width="1.1"/><path d="M137 846.80 H142.5" stroke="#9a9a9a" stroke-width="1.1"/><path d="M137 834.60 H142.5" stroke="#9a9a9a" stroke-width="1.1"/><path d="M137 822.14 H142.5" stroke="#9a9a9a" stroke-width="1.1"/><path d="M137 810.19 H142.5" stroke="#9a9a9a" stroke-width="1.1"/><path d="M137 798.59 H142.5" stroke="#9a9a9a" stroke-width="1.1"/><path d="M137 786.30 H142.5" stroke="#9a9a9a" stroke-width="1.1"/><path d="M137 774.69 H142.5" stroke="#9a9a9a" stroke-width="1.1"/><path d="M137 762.40 H142.5" stroke="#9a9a9a" stroke-width="1.1"/><path d="M137 750.80 H142.5" stroke="#9a9a9a" stroke-width="1.1"/><path d="M137 738.17 H142.5" stroke="#9a9a9a" stroke-width="1.1"/><path d="M137 725.37 H142.5" stroke="#9a9a9a" stroke-width="1.1"/><path d="M137 714.27 H142.5" stroke="#9a9a9a" stroke-width="1.1"/><path d="M137 701.47 H142.5" stroke="#9a9a9a" stroke-width="1.1"/><path d="M137 690.38 H142.5" stroke="#9a9a9a" stroke-width="1.1"/><path d="M137 677.58 H142.5" stroke="#9a9a9a" stroke-width="1.1"/><path d="M1290.8 677.58 V882.40" stroke="#9a9a9a" stroke-width="1.2" fill="none"/><path d="M1290.8 882.80 H1296.8" stroke="#9a9a9a" stroke-width="1.1"/><path d="M1290.8 862.50 H1296.8" stroke="#9a9a9a" stroke-width="1.1"/><path d="M1290.8 842.20 H1296.8" stroke="#9a9a9a" stroke-width="1.1"/><path d="M1290.8 821.90 H1296.8" stroke="#9a9a9a" stroke-width="1.1"/><path d="M1290.8 801.60 H1296.8" stroke="#9a9a9a" stroke-width="1.1"/><path d="M1290.8 781.30 H1296.8" stroke="#9a9a9a" stroke-width="1.1"/><path d="M1290.8 761.00 H1296.8" stroke="#9a9a9a" stroke-width="1.1"/><path d="M1290.8 740.70 H1296.8" stroke="#9a9a9a" stroke-width="1.1"/><path d="M1290.8 720.40 H1296.8" stroke="#9a9a9a" stroke-width="1.1"/><path d="M1290.8 700.10 H1296.8" stroke="#9a9a9a" stroke-width="1.1"/><path d="M1290.8 679.80 H1296.8" stroke="#9a9a9a" stroke-width="1.1"/><rect x="145.3" y="688.3" width="9.4" height="184" fill="#e6e6e6"/><rect x="147.4" y="690.4" width="5.4" height="4.4" fill="#fff"/><rect x="147.4" y="866" width="5.4" height="4.4" fill="#fff"/><path d="M146.1 685.2 L149.9 680.9 L153.6 685.2 Z" fill="#e6e6e6"/><path d="M146.1 875.5 L149.9 879.8 L153.6 875.5 Z" fill="#e6e6e6"/><rect x="167.9" y="886.4" width="1113.1" height="8.9" fill="#e6e6e6"/><rect x="169.9" y="888.4" width="4.3" height="4.7" fill="#fff"/><rect x="1275" y="888.4" width="4" height="4.7" fill="#fff"/><path d="M165 887 L160.7 890.6 L165 894.2 Z" fill="#e6e6e6"/><path d="M1284.2 887 L1288.5 890.6 L1284.2 894.2 Z" fill="#e6e6e6"/><path d="M157.6 898.2 H1290.8" stroke="#a8a8a8" stroke-width="1.5"/><path d="M209.40 898.2 V903.8" stroke="#9a9a9a" stroke-width="1.1"/><path d="M312.54 898.2 V903.8" stroke="#9a9a9a" stroke-width="1.1"/><path d="M415.68 898.2 V903.8" stroke="#9a9a9a" stroke-width="1.1"/><path d="M518.82 898.2 V903.8" stroke="#9a9a9a" stroke-width="1.1"/><path d="M621.96 898.2 V903.8" stroke="#9a9a9a" stroke-width="1.1"/><path d="M725.10 898.2 V903.8" stroke="#9a9a9a" stroke-width="1.1"/><path d="M828.24 898.2 V903.8" stroke="#9a9a9a" stroke-width="1.1"/><path d="M931.38 898.2 V903.8" stroke="#9a9a9a" stroke-width="1.1"/><path d="M1034.52 898.2 V903.8" stroke="#9a9a9a" stroke-width="1.1"/><path d="M1137.66 898.2 V903.8" stroke="#9a9a9a" stroke-width="1.1"/><path d="M1240.80 898.2 V903.8" stroke="#9a9a9a" stroke-width="1.1"/><rect x="173.6" y="818.2" width="4.8" height="3.9" fill="#4c8c2b"/><path d="M178.6 822.1 H183" stroke="#f44336" stroke-width="1"/><path d="M183.8 822.1 H188.4" stroke="#2196f3" stroke-width="1"/><path d="M189.2 822.1 H193.6" stroke="#f44336" stroke-width="1"/><path d="M194 822.1 H1277" stroke="#222" stroke-width="0.9"/><path d="M209.4 822.1 H1240.8" stroke="#2196f3" stroke-width="2.2"/><path d="M194.2 821.7 H245.8" stroke="#1c3f70" stroke-width="0.8"/><path d="M297.3 821.7 H348.9" stroke="#1c3f70" stroke-width="0.8"/><path d="M400.5 821.7 H452.1" stroke="#1c3f70" stroke-width="0.8"/><path d="M503.6 821.7 H555.2" stroke="#1c3f70" stroke-width="0.8"/><path d="M606.8 821.7 H658.4" stroke="#1c3f70" stroke-width="0.8"/><path d="M709.9 821.7 H761.5" stroke="#1c3f70" stroke-width="0.8"/><path d="M813.0 821.7 H864.6" stroke="#1c3f70" stroke-width="0.8"/><path d="M916.2 821.7 H967.8" stroke="#1c3f70" stroke-width="0.8"/><path d="M1019.3 821.7 H1070.9" stroke="#1c3f70" stroke-width="0.8"/><path d="M1122.5 821.7 H1174.1" stroke="#1c3f70" stroke-width="0.8"/><path d="M1225.6 821.7 H1277.2" stroke="#1c3f70" stroke-width="0.8"/><path d="M1240.8 822.1 H1277" stroke="#444" stroke-width="0.8"/><polyline points="209.4,817.5 415.7,817.5 518.8,859.6 622.0,817.5 725.1,859.6 828.2,817.5 931.4,859.6 1034.5,817.5 1240.8,817.5" fill="none" stroke="#e8473f" stroke-width="2.8" stroke-linejoin="round"/><polyline points="209.4,818.8 415.7,818.8 518.8,859.6 622.0,684.4 725.1,726.4 828.2,684.4 931.4,726.4 1034.5,684.4 1240.8,684.4" fill="none" stroke="#ff9010" stroke-width="2.8" stroke-linejoin="round"/><path d="M209.4 817.1 H1240.8" stroke="#111" stroke-width="2"/><rect x="601" y="690.4" width="5" height="131.7" fill="#e91e63"/><rect x="508.2" y="822.1" width="5" height="42.6" fill="#000"/><rect x="714.8" y="822.1" width="5" height="42.6" fill="#000"/><rect x="921.3" y="822.1" width="5" height="42.6" fill="#000"/></svg>
<span class="t" style="top:875.85px;font-size:10.8px;line-height:14.8px;color:#8c8c8c;right:1607.00px;transform-origin:100% 50%;transform:scaleX(0.9972);-webkit-text-stroke:0.18px #8c8c8c;">-500</span>
<span class="t" style="top:863.80px;font-size:10.8px;line-height:14.8px;color:#8c8c8c;right:1607.00px;transform-origin:100% 50%;transform:scaleX(0.9972);-webkit-text-stroke:0.18px #8c8c8c;">-400</span>
<span class="t" style="top:851.75px;font-size:10.8px;line-height:14.8px;color:#8c8c8c;right:1607.00px;transform-origin:100% 50%;transform:scaleX(0.9972);-webkit-text-stroke:0.18px #8c8c8c;">-300</span>
<span class="t" style="top:839.70px;font-size:10.8px;line-height:14.8px;color:#8c8c8c;right:1607.00px;transform-origin:100% 50%;transform:scaleX(0.9972);-webkit-text-stroke:0.18px #8c8c8c;">-200</span>
<span class="t" style="top:827.65px;font-size:10.8px;line-height:14.8px;color:#8c8c8c;right:1607.00px;transform-origin:100% 50%;transform:scaleX(0.9972);-webkit-text-stroke:0.18px #8c8c8c;">-100</span>
<span class="t" style="top:815.60px;font-size:10.8px;line-height:14.8px;color:#8c8c8c;right:1607.00px;transform-origin:100% 50%;transform:scaleX(1.0268);-webkit-text-stroke:0.18px #8c8c8c;">0</span>
<span class="t" style="top:803.55px;font-size:10.8px;line-height:14.8px;color:#8c8c8c;right:1607.00px;transform-origin:100% 50%;transform:scaleX(1.0286);-webkit-text-stroke:0.18px #8c8c8c;">100</span>
<span class="t" style="top:791.50px;font-size:10.8px;line-height:14.8px;color:#8c8c8c;right:1607.00px;transform-origin:100% 50%;transform:scaleX(1.0286);-webkit-text-stroke:0.18px #8c8c8c;">200</span>
<span class="t" style="top:779.45px;font-size:10.8px;line-height:14.8px;color:#8c8c8c;right:1607.00px;transform-origin:100% 50%;transform:scaleX(1.0286);-webkit-text-stroke:0.18px #8c8c8c;">300</span>
<span class="t" style="top:767.40px;font-size:10.8px;line-height:14.8px;color:#8c8c8c;right:1607.00px;transform-origin:100% 50%;transform:scaleX(1.0286);-webkit-text-stroke:0.18px #8c8c8c;">400</span>
<span class="t" style="top:755.35px;font-size:10.8px;line-height:14.8px;color:#8c8c8c;right:1607.00px;transform-origin:100% 50%;transform:scaleX(1.0286);-webkit-text-stroke:0.18px #8c8c8c;">500</span>
<span class="t" style="top:743.30px;font-size:10.8px;line-height:14.8px;color:#8c8c8c;right:1607.00px;transform-origin:100% 50%;transform:scaleX(1.0286);-webkit-text-stroke:0.18px #8c8c8c;">600</span>
<span class="t" style="top:731.25px;font-size:10.8px;line-height:14.8px;color:#8c8c8c;right:1607.00px;transform-origin:100% 50%;transform:scaleX(1.0286);-webkit-text-stroke:0.18px #8c8c8c;">700</span>
<span class="t" style="top:719.20px;font-size:10.8px;line-height:14.8px;color:#8c8c8c;right:1607.00px;transform-origin:100% 50%;transform:scaleX(1.0286);-webkit-text-stroke:0.18px #8c8c8c;">800</span>
<span class="t" style="top:707.15px;font-size:10.8px;line-height:14.8px;color:#8c8c8c;right:1607.00px;transform-origin:100% 50%;transform:scaleX(1.0286);-webkit-text-stroke:0.18px #8c8c8c;">900</span>
<span class="t" style="top:695.10px;font-size:10.8px;line-height:14.8px;color:#8c8c8c;right:1607.00px;transform-origin:100% 50%;transform:scaleX(1.0148);-webkit-text-stroke:0.18px #8c8c8c;">1 000</span>
<span class="t" style="top:683.05px;font-size:10.8px;line-height:14.8px;color:#8c8c8c;right:1607.00px;transform-origin:100% 50%;transform:scaleX(1.0148);-webkit-text-stroke:0.18px #8c8c8c;">1 100</span>
<span class="t" style="top:671.00px;font-size:10.8px;line-height:14.8px;color:#8c8c8c;right:1607.00px;transform-origin:100% 50%;transform:scaleX(1.0148);-webkit-text-stroke:0.18px #8c8c8c;">1 200</span>
<span class="t" style="top:855.40px;font-size:10.8px;line-height:14.8px;color:#8c8c8c;left:1300.80px;transform-origin:0 50%;transform:scaleX(1.0281);-webkit-text-stroke:0.18px #8c8c8c;">10</span>
<span class="t" style="top:835.10px;font-size:10.8px;line-height:14.8px;color:#8c8c8c;left:1300.80px;transform-origin:0 50%;transform:scaleX(1.0281);-webkit-text-stroke:0.18px #8c8c8c;">20</span>
<span class="t" style="top:814.80px;font-size:10.8px;line-height:14.8px;color:#8c8c8c;left:1300.80px;transform-origin:0 50%;transform:scaleX(1.0281);-webkit-text-stroke:0.18px #8c8c8c;">30</span>
<span class="t" style="top:794.50px;font-size:10.8px;line-height:14.8px;color:#8c8c8c;left:1300.80px;transform-origin:0 50%;transform:scaleX(1.0281);-webkit-text-stroke:0.18px #8c8c8c;">40</span>
<span class="t" style="top:774.20px;font-size:10.8px;line-height:14.8px;color:#8c8c8c;left:1300.80px;transform-origin:0 50%;transform:scaleX(1.0281);-webkit-text-stroke:0.18px #8c8c8c;">50</span>
<span class="t" style="top:753.90px;font-size:10.8px;line-height:14.8px;color:#8c8c8c;left:1300.80px;transform-origin:0 50%;transform:scaleX(1.0281);-webkit-text-stroke:0.18px #8c8c8c;">60</span>
<span class="t" style="top:733.60px;font-size:10.8px;line-height:14.8px;color:#8c8c8c;left:1300.80px;transform-origin:0 50%;transform:scaleX(1.0281);-webkit-text-stroke:0.18px #8c8c8c;">70</span>
<span class="t" style="top:713.30px;font-size:10.8px;line-height:14.8px;color:#8c8c8c;left:1300.80px;transform-origin:0 50%;transform:scaleX(1.0281);-webkit-text-stroke:0.18px #8c8c8c;">80</span>
<span class="t" style="top:693.00px;font-size:10.8px;line-height:14.8px;color:#8c8c8c;left:1300.80px;transform-origin:0 50%;transform:scaleX(1.0281);-webkit-text-stroke:0.18px #8c8c8c;">90</span>
<span class="t" style="top:907.88px;font-size:11.43px;line-height:15.43px;color:#8c8c8c;left:180.51px;transform-origin:50% 50%;transform:scaleX(1.0033);-webkit-text-stroke:0.18px #8c8c8c;">30.05.2025</span>
<span class="t" style="top:907.88px;font-size:11.43px;line-height:15.43px;color:#8c8c8c;left:283.65px;transform-origin:50% 50%;transform:scaleX(1.0033);-webkit-text-stroke:0.18px #8c8c8c;">31.05.2025</span>
<span class="t" style="top:907.88px;font-size:11.43px;line-height:15.43px;color:#8c8c8c;left:389.97px;transform-origin:50% 50%;transform:scaleX(1.0023);-webkit-text-stroke:0.18px #8c8c8c;">1.06.2025</span>
<span class="t" style="top:907.88px;font-size:11.43px;line-height:15.43px;color:#8c8c8c;left:493.11px;transform-origin:50% 50%;transform:scaleX(1.0023);-webkit-text-stroke:0.18px #8c8c8c;">2.06.2025</span>
<span class="t" style="top:907.88px;font-size:11.43px;line-height:15.43px;color:#8c8c8c;left:596.25px;transform-origin:50% 50%;transform:scaleX(1.0023);-webkit-text-stroke:0.18px #8c8c8c;">3.06.2025</span>
<span class="t" style="top:907.88px;font-size:11.43px;line-height:15.43px;color:#8c8c8c;left:699.39px;transform-origin:50% 50%;transform:scaleX(1.0023);-webkit-text-stroke:0.18px #8c8c8c;">4.06.2025</span>
<span class="t" style="top:907.88px;font-size:11.43px;line-height:15.43px;color:#8c8c8c;left:802.53px;transform-origin:50% 50%;transform:scaleX(1.0023);-webkit-text-stroke:0.18px #8c8c8c;">5.06.2025</span>
<span class="t" style="top:907.88px;font-size:11.43px;line-height:15.43px;color:#8c8c8c;left:905.67px;transform-origin:50% 50%;transform:scaleX(1.0023);-webkit-text-stroke:0.18px #8c8c8c;">6.06.2025</span>
<span class="t" style="top:907.88px;font-size:11.43px;line-height:15.43px;color:#8c8c8c;left:1008.81px;transform-origin:50% 50%;transform:scaleX(1.0023);-webkit-text-stroke:0.18px #8c8c8c;">7.06.2025</span>
<span class="t" style="top:907.88px;font-size:11.43px;line-height:15.43px;color:#8c8c8c;left:1111.95px;transform-origin:50% 50%;transform:scaleX(1.0023);-webkit-text-stroke:0.18px #8c8c8c;">8.06.2025</span>
<span class="t" style="top:907.88px;font-size:11.43px;line-height:15.43px;color:#8c8c8c;left:1215.09px;transform-origin:50% 50%;transform:scaleX(1.0023);-webkit-text-stroke:0.18px #8c8c8c;">9.06.2025</span>
<span class="t" style="left:92.00px;top:780.00px;font-size:11.43px;line-height:15.43px;color:#333;transform:translate(-50%,-50%) rotate(-90deg) scaleX(0.9915);-webkit-text-stroke:0.1px #333;">Ilość</span>
<span class="t" style="left:1326.20px;top:780.00px;font-size:11.43px;line-height:15.43px;color:#333;transform:translate(-50%,-50%) rotate(-90deg) scaleX(0.9814);-webkit-text-stroke:0.1px #333;">Współczynnik cyklu [%]</span>
<span class="t" style="top:671.78px;font-size:11.43px;line-height:15.43px;color:#222;left:1395.60px;transform-origin:0 50%;transform:scaleX(1.0040);-webkit-text-stroke:0.18px #222;">Stan początkowy</span>
<span class="t" style="top:696.00px;font-size:11.43px;line-height:15.43px;color:#222;left:1395.60px;transform-origin:0 50%;transform:scaleX(0.9818);-webkit-text-stroke:0.18px #222;">Rozchody</span>
<span class="t" style="top:720.22px;font-size:11.43px;line-height:15.43px;color:#222;left:1395.60px;transform-origin:0 50%;transform:scaleX(0.9901);-webkit-text-stroke:0.18px #222;">Przychody</span>
<span class="t" style="top:744.44px;font-size:11.43px;line-height:15.43px;color:#222;left:1395.60px;transform-origin:0 50%;transform:scaleX(1.0087);-webkit-text-stroke:0.18px #222;">Ilość do zamówienia w dniu dostawy</span>
<span class="t" style="top:768.66px;font-size:11.43px;line-height:15.43px;color:#222;left:1395.60px;transform-origin:0 50%;transform:scaleX(0.9804);-webkit-text-stroke:0.18px #222;">Stan</span>
<span class="t" style="top:792.88px;font-size:11.43px;line-height:15.43px;color:#222;left:1395.60px;transform-origin:0 50%;transform:scaleX(0.9846);-webkit-text-stroke:0.18px #222;">Stan z zam</span>
<span class="t" style="top:817.11px;font-size:11.43px;line-height:15.43px;color:#222;left:1395.60px;transform-origin:0 50%;transform:scaleX(1.0047);-webkit-text-stroke:0.18px #222;">Stan minimalny</span>
<span class="t" style="top:841.32px;font-size:11.43px;line-height:15.43px;color:#222;left:1395.60px;transform-origin:0 50%;transform:scaleX(0.9976);-webkit-text-stroke:0.18px #222;">Stan maksymalny</span>
<span class="t" style="top:865.54px;font-size:11.43px;line-height:15.43px;color:#222;left:1395.60px;transform-origin:0 50%;transform:scaleX(0.9896);-webkit-text-stroke:0.18px #222;">Stan min. na dni</span>
<span class="t" style="top:889.76px;font-size:11.43px;line-height:15.43px;color:#222;left:1395.60px;transform-origin:0 50%;transform:scaleX(0.9991);-webkit-text-stroke:0.18px #222;">Stan historyczny</span>
<span class="t" style="top:913.98px;font-size:11.43px;line-height:15.43px;color:#222;left:1395.60px;transform-origin:0 50%;transform:scaleX(1.0109);-webkit-text-stroke:0.18px #222;">04. Towar w drodze</span>
<span class="t" style="top:938.20px;font-size:11.43px;line-height:15.43px;color:#222;left:1395.60px;transform-origin:0 50%;transform:scaleX(1.0016);-webkit-text-stroke:0.18px #222;">03. Zapotrzebowanie</span>
<svg style="left:0;top:0" width="1740" height="996" viewBox="0 0 1740 996"><rect x="1364.9" y="674.50" width="20.8" height="9.2" fill="#4c8c2b" stroke="#222" stroke-width="0.9"/><rect x="1364.9" y="698.72" width="20.8" height="9.2" fill="#f44336" stroke="#222" stroke-width="0.9"/><rect x="1364.9" y="722.94" width="20.8" height="9.2" fill="#3d5afe" stroke="#222" stroke-width="0.9"/><rect x="1364.9" y="747.16" width="20.8" height="9.2" fill="#e91e63" stroke="#222" stroke-width="0.9"/><path d="M1364.6 775.98 H1386" stroke="#f0453c" stroke-width="2.6"/><path d="M1364.6 800.20 H1386" stroke="#ff9010" stroke-width="2.6"/><path d="M1364.6 824.42 H1386" stroke="#a8a030" stroke-width="2.0"/><path d="M1364.6 848.64 H1386" stroke="#f2554c" stroke-width="2.0"/><path d="M1364.6 872.86 H1386" stroke="#2196f3" stroke-width="2.2"/><path d="M1364.6 897.08 H1386" stroke="#111" stroke-width="1.8"/><rect x="1364.9" y="916.70" width="20.8" height="9.2" fill="#000" stroke="#222" stroke-width="0.9"/><rect x="1364.9" y="940.92" width="20.8" height="9.2" fill="#000" stroke="#222" stroke-width="0.9"/></svg>
</body></html>
